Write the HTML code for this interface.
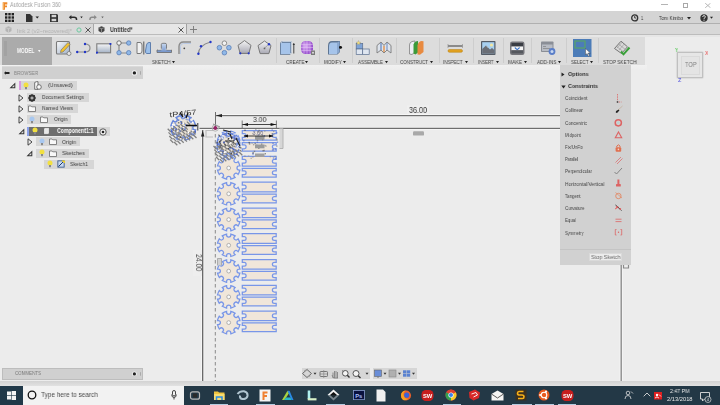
<!DOCTYPE html>
<html><head><meta charset="utf-8">
<style>
*{margin:0;padding:0;box-sizing:border-box}
html,body{width:720px;height:405px;overflow:hidden;background:#ececec;font-family:"Liberation Sans",sans-serif}
.a{position:absolute}
.t{position:absolute;white-space:nowrap;line-height:1;transform-origin:0 0;will-change:transform}
</style></head><body>
<div class="a" style="left:0;top:0;width:720px;height:11px;background:#fff"></div>
<svg class="a" style="left:2px;top:2px" width="6" height="8" viewBox="0 0 6 8"><path d="M0.8 0.3H5.3V2.4H3V3.5H5V5.2H3V7.7H0.8Z" fill="#ef8a2a"/><path d="M0.8 0.3H2V7.7H0.8Z" fill="#f6b060"/></svg>
<div class="t" style="left:10.00px;top:2.04px;font-size:6.69px;color:#a4a4a4;transform:scaleX(0.812);">Autodesk Fusion 360</div>
<div class="a" style="left:660.7px;top:4.4px;width:7.7px;height:1px;background:#b4b4b4"></div>
<div class="a" style="left:683px;top:3.2px;width:4.6px;height:4.6px;border:1px solid #a8a8a8"></div>
<svg class="a" style="left:705.2px;top:3.1px" width="6" height="5" viewBox="0 0 6 5"><path d="M0.2 0.2L5.5 4.8M5.5 0.2L0.2 4.8" stroke="#b0b0b0" stroke-width="0.9"/></svg>
<div class="a" style="left:0;top:11px;width:720px;height:13px;background:#d4d4d4"></div>
<svg class="a" style="left:5px;top:13px" width="9" height="9" viewBox="0 0 9 9"><g fill="#222">
<rect x="0" y="0" width="2.4" height="2.4"/><rect x="3.3" y="0" width="2.4" height="2.4"/><rect x="6.6" y="0" width="2.4" height="2.4"/>
<rect x="0" y="3.3" width="2.4" height="2.4"/><rect x="3.3" y="3.3" width="2.4" height="2.4"/><rect x="6.6" y="3.3" width="2.4" height="2.4"/>
<rect x="0" y="6.6" width="2.4" height="2.4"/><rect x="3.3" y="6.6" width="2.4" height="2.4"/><rect x="6.6" y="6.6" width="2.4" height="2.4"/></g></svg>
<svg class="a" style="left:26px;top:14px" width="14" height="8" viewBox="0 0 14 8"><path d="M0 0H4L6.5 2.5V8H0Z" fill="#333"/><path d="M9.5 2.5H13L11.25 4.5Z" fill="#222"/></svg>
<svg class="a" style="left:50px;top:14px" width="8" height="8" viewBox="0 0 8 8"><path d="M0 0H7L8 1V8H0Z" fill="#333"/><rect x="1.6" y="0.8" width="4.6" height="2.4" fill="#d4d4d4"/><rect x="1.6" y="4.8" width="4.6" height="2.4" fill="#d4d4d4"/></svg>
<svg class="a" style="left:68px;top:14px" width="16" height="8" viewBox="0 0 16 8"><path d="M2.5 3.2H6Q8.5 3.2 8.5 5.2V6" fill="none" stroke="#2a2a2a" stroke-width="1.5"/><path d="M0.8 3.2L3.4 0.9V5.5Z" fill="#2a2a2a"/><path d="M12.3 2.5H14.7L13.5 4.2Z" fill="#222"/></svg>
<svg class="a" style="left:89px;top:14px" width="16" height="8" viewBox="0 0 16 8"><path d="M6 3.2H3Q1 3.2 1 5.2V6" fill="none" stroke="#8a8a8a" stroke-width="1.5"/><path d="M7.8 3.2L5.2 0.9V5.5Z" fill="#8a8a8a"/><path d="M12.3 2.5H14.7L13.5 4.2Z" fill="#666"/></svg>
<svg class="a" style="left:631px;top:14px" width="8" height="8" viewBox="0 0 8 8"><circle cx="3.7" cy="3.9" r="3" fill="none" stroke="#333" stroke-width="1.3"/><path d="M3.7 2V4H5.2" fill="none" stroke="#333" stroke-width="0.9"/></svg>
<div class="t" style="left:640.60px;top:14.61px;font-size:6.25px;color:#333;transform:scaleX(0.663);">1</div>
<div class="t" style="left:659.00px;top:15.01px;font-size:6.25px;color:#333;transform:scaleX(0.768);">Tom Kimbo</div>
<svg class="a" style="left:686.5px;top:16.8px" width="4" height="3" viewBox="0 0 4 3"><path d="M0 0H4L2 2.4Z" fill="#222"/></svg>
<svg class="a" style="left:700px;top:14px" width="14" height="8" viewBox="0 0 14 8"><circle cx="4" cy="4" r="3.7" fill="#333"/><path d="M2.7 3Q2.7 1.6 4 1.6Q5.4 1.6 5.4 2.9Q5.4 3.8 4 4.4V5.2" fill="none" stroke="#d4d4d4" stroke-width="1"/><rect x="3.5" y="5.8" width="1" height="1" fill="#d4d4d4"/><path d="M10 2.8H13L11.5 4.8Z" fill="#222"/></svg>
<div class="a" style="left:0;top:23px;width:720px;height:1px;background:#b0b0b0"></div>
<div class="a" style="left:0;top:24px;width:720px;height:11px;background:#d8d8d8"></div>
<div class="a" style="left:0;top:34px;width:720px;height:1px;background:#bcbcbc"></div>
<div class="a" style="left:93px;top:24px;width:94px;height:10px;background:#e6e6e6;border-left:1px solid #a8a8a8;border-right:1px solid #a0a0a0"></div>
<svg class="a" style="left:5px;top:26px" width="7" height="7" viewBox="0 0 7 7"><path d="M0.5 1.5L3.5 0.3L6.5 1.5V5L3.5 6.7L0.5 5Z" fill="#b4b4b4"/><path d="M0.5 1.5L3.5 2.7L6.5 1.5M3.5 2.7V6.7" fill="none" stroke="#d8d8d8" stroke-width="0.6"/></svg>
<div class="t" style="left:17.00px;top:27.51px;font-size:6.25px;color:#b0b0b0;transform:scaleX(0.902);">link 2 (v2~recovered)*</div>
<svg class="a" style="left:76px;top:27px" width="6" height="6" viewBox="0 0 6 6"><circle cx="3" cy="3" r="2.1" fill="none" stroke="#6cc9a0" stroke-width="1"/></svg>
<svg class="a" style="left:85px;top:27px" width="6" height="6" viewBox="0 0 6 6"><path d="M0.5 0.5L5.5 5.5M5.5 0.5L0.5 5.5" stroke="#444" stroke-width="0.9"/></svg>
<svg class="a" style="left:98px;top:26px" width="7" height="7" viewBox="0 0 7 7"><path d="M0.5 1.5L3.5 0.3L6.5 1.5V5L3.5 6.7L0.5 5Z" fill="#444"/><path d="M0.5 1.5L3.5 2.7L6.5 1.5M3.5 2.7V6.7" fill="none" stroke="#bbb" stroke-width="0.6"/></svg>
<div class="t" style="left:110.00px;top:27.39px;font-size:6.40px;color:#3a3a3a;font-weight:bold;transform:scaleX(0.856);">Untitled*</div>
<svg class="a" style="left:178px;top:27px" width="6" height="6" viewBox="0 0 6 6"><path d="M0.5 0.5L5.5 5.5M5.5 0.5L0.5 5.5" stroke="#444" stroke-width="0.9"/></svg>
<svg class="a" style="left:190px;top:26px" width="7" height="7" viewBox="0 0 7 7"><path d="M3.5 0V7M0 3.5H7" stroke="#777" stroke-width="0.9"/></svg>
<div class="a" style="left:0;top:35px;width:720px;height:30px;background:#ececec"></div>
<div class="a" style="left:0;top:35px;width:645px;height:30px;background:#dcdcdc"></div>
<div class="a" style="left:0;top:35px;width:720px;height:1.5px;background:#e6e6e6"></div>
<div class="a" style="left:0;top:65px;width:647px;height:5px;background:linear-gradient(#f1f1f1,#ededed)"></div>
<div class="a" style="left:2px;top:37px;width:50px;height:28px;background:#ababab"></div>
<div class="a" style="left:4px;top:41px;width:3px;height:15px;background:#a2a2a2"></div>
<div class="t" style="left:16.80px;top:48.24px;font-size:6.69px;color:#f8f8f8;font-weight:bold;transform:scaleX(0.725);">MODEL</div>
<svg class="a" style="left:37.8px;top:50.3px" width="3" height="3" viewBox="0 0 3 3"><path d="M0 0H2.6L1.3 2.2Z" fill="#f8f8f8"/></svg>
<div class="a" style="left:276px;top:38px;width:1px;height:25px;background:#cdcdcd"></div>
<div class="a" style="left:318.5px;top:38px;width:1px;height:25px;background:#cdcdcd"></div>
<div class="a" style="left:352px;top:38px;width:1px;height:25px;background:#cdcdcd"></div>
<div class="a" style="left:396px;top:38px;width:1px;height:25px;background:#cdcdcd"></div>
<div class="a" style="left:438.5px;top:38px;width:1px;height:25px;background:#cdcdcd"></div>
<div class="a" style="left:473px;top:38px;width:1px;height:25px;background:#cdcdcd"></div>
<div class="a" style="left:503px;top:38px;width:1px;height:25px;background:#cdcdcd"></div>
<div class="a" style="left:531px;top:38px;width:1px;height:25px;background:#cdcdcd"></div>
<div class="a" style="left:565.5px;top:38px;width:1px;height:25px;background:#cdcdcd"></div>
<div class="a" style="left:598px;top:38px;width:1px;height:25px;background:#cdcdcd"></div>
<div class="t" style="left:152.00px;top:60.05px;font-size:5.96px;color:#464646;transform:scaleX(0.766);">SKETCH</div>
<svg class="a" style="left:171.5px;top:61px" width="3" height="3" viewBox="0 0 3 3"><path d="M0 0H3L1.5 2.2Z" fill="#222"/></svg>
<div class="t" style="left:285.50px;top:60.05px;font-size:5.96px;color:#464646;transform:scaleX(0.780);">CREATE</div>
<svg class="a" style="left:305.0px;top:61px" width="3" height="3" viewBox="0 0 3 3"><path d="M0 0H3L1.5 2.2Z" fill="#222"/></svg>
<div class="t" style="left:324.00px;top:60.05px;font-size:5.96px;color:#464646;transform:scaleX(0.764);">MODIFY</div>
<svg class="a" style="left:342.5px;top:61px" width="3" height="3" viewBox="0 0 3 3"><path d="M0 0H3L1.5 2.2Z" fill="#222"/></svg>
<div class="t" style="left:358.00px;top:60.05px;font-size:5.96px;color:#464646;transform:scaleX(0.778);">ASSEMBLE</div>
<svg class="a" style="left:384.5px;top:61px" width="3" height="3" viewBox="0 0 3 3"><path d="M0 0H3L1.5 2.2Z" fill="#222"/></svg>
<div class="t" style="left:400.00px;top:60.05px;font-size:5.96px;color:#464646;transform:scaleX(0.748);">CONSTRUCT</div>
<svg class="a" style="left:429.5px;top:61px" width="3" height="3" viewBox="0 0 3 3"><path d="M0 0H3L1.5 2.2Z" fill="#222"/></svg>
<div class="t" style="left:443.00px;top:60.05px;font-size:5.96px;color:#464646;transform:scaleX(0.755);">INSPECT</div>
<svg class="a" style="left:464.5px;top:61px" width="3" height="3" viewBox="0 0 3 3"><path d="M0 0H3L1.5 2.2Z" fill="#222"/></svg>
<div class="t" style="left:478.00px;top:60.05px;font-size:5.96px;color:#464646;transform:scaleX(0.722);">INSERT</div>
<svg class="a" style="left:495.5px;top:61px" width="3" height="3" viewBox="0 0 3 3"><path d="M0 0H3L1.5 2.2Z" fill="#222"/></svg>
<div class="t" style="left:508.00px;top:60.05px;font-size:5.96px;color:#464646;transform:scaleX(0.829);">MAKE</div>
<svg class="a" style="left:523.5px;top:61px" width="3" height="3" viewBox="0 0 3 3"><path d="M0 0H3L1.5 2.2Z" fill="#222"/></svg>
<div class="t" style="left:536.50px;top:60.05px;font-size:5.96px;color:#464646;transform:scaleX(0.796);">ADD-INS</div>
<svg class="a" style="left:557.5px;top:61px" width="3" height="3" viewBox="0 0 3 3"><path d="M0 0H3L1.5 2.2Z" fill="#222"/></svg>
<div class="t" style="left:571.00px;top:60.05px;font-size:5.96px;color:#464646;transform:scaleX(0.755);">SELECT</div>
<svg class="a" style="left:589.5px;top:61px" width="3" height="3" viewBox="0 0 3 3"><path d="M0 0H3L1.5 2.2Z" fill="#222"/></svg>
<div class="t" style="left:603.00px;top:60.05px;font-size:5.96px;color:#464646;transform:scaleX(0.801);">STOP SKETCH</div>

<svg class="a" style="left:55px;top:40px" width="17" height="16" viewBox="0 0 17 16">
 <defs><linearGradient id="g1" x1="0" y1="0" x2="1" y2="1"><stop offset="0" stop-color="#fafafa"/><stop offset="1" stop-color="#9fb0c8"/></linearGradient></defs>
 <rect x="1.5" y="1.5" width="13" height="12.5" rx="1" fill="url(#g1)" stroke="#7a7a7a" stroke-width="1.1"/>
 <path d="M6 10L13 2.5L15 4.5L8 12L5.5 12.5Z" fill="#f2c230" stroke="#6a6a6a" stroke-width="0.6"/>
 <circle cx="14" cy="13.5" r="2" fill="#e8e8e8" stroke="#777" stroke-width="0.8"/>
</svg>
<svg class="a" style="left:75px;top:42px" width="17" height="12" viewBox="0 0 17 12">
 <path d="M2 10H10Q15 10 15 6Q15 2 10 2" fill="none" stroke="#8c8c8c" stroke-width="1.2"/>
 <circle cx="2.2" cy="10" r="1.2" fill="#2236c8"/><circle cx="10" cy="10" r="1.2" fill="#2236c8"/><circle cx="10" cy="2" r="1.2" fill="#2236c8"/>
</svg>
<svg class="a" style="left:96px;top:43px" width="16" height="11" viewBox="0 0 16 11">
 <defs><linearGradient id="g2" x1="0" y1="0" x2="0" y2="1"><stop offset="0" stop-color="#f6f6f6"/><stop offset="1" stop-color="#a4b2c6"/></linearGradient></defs>
 <rect x="0.8" y="0.8" width="13.8" height="9" fill="url(#g2)" stroke="#7d7d7d" stroke-width="1.1"/>
 <circle cx="1" cy="9.6" r="1.1" fill="#2236c8"/><circle cx="14.4" cy="1" r="1.1" fill="#2236c8"/>
</svg>
<svg class="a" style="left:115px;top:40px" width="17" height="16" viewBox="0 0 17 16">
 <path d="M4 3H13.5M4 3V13M4 13H13.5" stroke="#8a8a8a" stroke-width="1.2" fill="none"/>
 <circle cx="4" cy="3" r="2.2" fill="#f4f4f4" stroke="#555" stroke-width="0.8"/>
 <circle cx="13.7" cy="3" r="2.2" fill="#8fb8e8" stroke="#5a7fb8" stroke-width="0.8"/>
 <circle cx="4" cy="12.7" r="2.2" fill="#8fb8e8" stroke="#5a7fb8" stroke-width="0.8"/>
 <circle cx="13.7" cy="12.7" r="2.2" fill="#8fb8e8" stroke="#5a7fb8" stroke-width="0.8"/>
</svg>
<svg class="a" style="left:136px;top:41px" width="16" height="14" viewBox="0 0 16 14">
 <path d="M1 1.5H4Q6 1.5 6 4V10Q6 12.5 4 12.5H1Z" fill="#f2f2f2" stroke="#7a7a7a" stroke-width="1"/>
 <path d="M7.8 0.5V13.5" stroke="#555" stroke-width="1"/>
 <path d="M14.5 1.5V12.5H10.5Q9.5 12.5 9.5 10L10.5 4Q11 1.5 13 1.5Z" fill="#9cc0ea" stroke="#5f7fae" stroke-width="1"/>
</svg>
<svg class="a" style="left:156px;top:42px" width="17" height="12" viewBox="0 0 17 12">
 <defs><linearGradient id="g3" x1="0" y1="0" x2="0" y2="1"><stop offset="0" stop-color="#c9d9f0"/><stop offset="1" stop-color="#6f90c8"/></linearGradient></defs>
 <path d="M1 10.5H15.5V8H10.5V2.5Q10.5 1.3 9 1.3H6.8Q5.3 1.3 5.3 2.5V8H1Z" fill="url(#g3)" stroke="#6a6a6a" stroke-width="0.8"/>
 <path d="M2 7.2H6.2M9.6 7.2H15" stroke="#eee" stroke-width="0.8"/>
</svg>
<svg class="a" style="left:176px;top:40px" width="16" height="16" viewBox="0 0 16 16">
 <path d="M3 14V6.5Q3 2 7.5 2H15" fill="none" stroke="#8a8a8a" stroke-width="1.4"/>
 <path d="M4.5 14V6.5Q4.5 3.5 7.5 3.5H15" fill="none" stroke="#b9c9e4" stroke-width="1"/>
 <circle cx="8.3" cy="8.3" r="0.9" fill="#444"/>
</svg>
<svg class="a" style="left:196px;top:40px" width="17" height="16" viewBox="0 0 17 16">
 <path d="M2.3 14Q3 5 14.5 2" fill="none" stroke="#8a8a8a" stroke-width="1.2"/>
 <circle cx="2.4" cy="13.8" r="1.2" fill="#2236c8"/><circle cx="5" cy="6.3" r="1.2" fill="#2236c8"/><circle cx="14.5" cy="2" r="1.2" fill="#2236c8"/>
</svg>
<svg class="a" style="left:216px;top:40px" width="16" height="16" viewBox="0 0 16 16">
 <circle cx="8.4" cy="3.2" r="2.3" fill="#f2f2f2" stroke="#7a7a7a" stroke-width="0.8"/>
 <circle cx="3.4" cy="7.7" r="2.3" fill="#8fb8e8" stroke="#5a7fb8" stroke-width="0.8"/>
 <circle cx="12.9" cy="7.7" r="2.3" fill="#8fb8e8" stroke="#5a7fb8" stroke-width="0.8"/>
 <circle cx="8.4" cy="12.7" r="2.3" fill="#8fb8e8" stroke="#5a7fb8" stroke-width="0.8"/>
</svg>
<svg class="a" style="left:237px;top:40px" width="15" height="15" viewBox="0 0 15 15">
 <defs><linearGradient id="g4" x1="0" y1="0" x2="0" y2="1"><stop offset="0" stop-color="#f4f4f4"/><stop offset="1" stop-color="#a9a9b4"/></linearGradient></defs>
 <path d="M7.5 0.6L14 5.3L11.9 13.4H3.1L1 5.3Z" fill="url(#g4)" stroke="#6e6e6e" stroke-width="0.9"/>
 <circle cx="3.3" cy="13.3" r="1.1" fill="#2236c8"/><circle cx="11.7" cy="13.3" r="1.1" fill="#2236c8"/>
</svg>
<svg class="a" style="left:257px;top:40px" width="16" height="16" viewBox="0 0 16 16">
 <path d="M7.5 1L14 5.6L11.9 13.6H3.1L1 5.6Z" fill="url(#g4)" stroke="#6e6e6e" stroke-width="0.9"/>
 <path d="M7.5 8.2L11.5 4.5" stroke="#999" stroke-width="0.8"/>
 <circle cx="7.5" cy="8.4" r="0.9" fill="#666"/><circle cx="12" cy="4.3" r="1.2" fill="#2236c8"/>
</svg>
<svg class="a" style="left:279px;top:40px" width="17" height="16" viewBox="0 0 17 16">
 <path d="M1 3L3 1H13V12.5L11 14.8H1Z" fill="#5e7592"/>
 <rect x="1.8" y="2.8" width="9.6" height="11.2" fill="#a6c4ea"/>
 <path d="M1.8 2.8L3.4 1.4H12.6V12.3L11.4 14" fill="none" stroke="#e8eef6" stroke-width="0.8"/>
 <path d="M14.8 3.5V13.5" stroke="#333" stroke-width="0.9"/><path d="M13.6 5L14.8 3L16 5Z" fill="#333"/>
</svg>
<svg class="a" style="left:300px;top:40px" width="16" height="16" viewBox="0 0 16 16">
 <defs><radialGradient id="g5" cx="0.4" cy="0.4" r="0.7"><stop offset="0" stop-color="#d9a8f2"/><stop offset="1" stop-color="#8a3ec6"/></radialGradient></defs>
 <path d="M1 6Q1 1 6 1H8Q13 1 13 6V9Q13 14 8 14H6Q1 14 1 9Z" fill="url(#g5)"/>
 <path d="M4 1.5V13.5M7 1V14M10 1.5V13.5M1.2 4.5H12.8M1 7.5H13M1.2 10.5H12.8" stroke="#e6c8f6" stroke-width="0.5"/>
 <rect x="11" y="10.5" width="4" height="4.5" fill="#7a7a7a"/><circle cx="13" cy="12.8" r="1" fill="#ddd"/>
</svg>
<svg class="a" style="left:327px;top:40px" width="17" height="16" viewBox="0 0 17 16">
 <path d="M1 14.5V6Q1 1 5 1H13V12L10.5 14.5Z" fill="#5e7592"/>
 <path d="M2 14V6.5Q2 2.5 5 2.5H10V14Z" fill="#a6c4ea"/>
 <path d="M10 2.5L12.5 1.2V12L10 14" fill="#8aa8d0"/>
 <path d="M12.5 6.3L15.5 7.4L12.5 8.5Z" fill="#111"/><circle cx="13.6" cy="7.4" r="1.4" fill="#111"/>
</svg>
<svg class="a" style="left:355px;top:40px" width="16" height="16" viewBox="0 0 16 16">
 <rect x="1.2" y="3.5" width="6.5" height="5.5" fill="#7fa4d8" stroke="#5a6e8e" stroke-width="0.7"/>
 <rect x="1.2" y="9" width="6.5" height="5.5" fill="#dfe6f0" stroke="#5a6e8e" stroke-width="0.7"/>
 <rect x="7.7" y="9" width="6.5" height="5.5" fill="#dfe6f0" stroke="#5a6e8e" stroke-width="0.7"/>
 <path d="M3.5 0.5L4.2 2.2L6 2.3L4.6 3.4L5.1 5L3.5 4.1L1.9 5L2.4 3.4L1 2.3L2.8 2.2Z" fill="#f4e07a" stroke="#888" stroke-width="0.3"/>
</svg>
<svg class="a" style="left:376px;top:41px" width="16" height="14" viewBox="0 0 16 14">
 <path d="M1 12V4.5L5 1L8 4.5L11 1L15 4.5V12L11 9L8 12L5 9Z" fill="#dde3ec" stroke="#7a7a7a" stroke-width="0.9"/>
 <path d="M5 2V9" stroke="#6a8ac0" stroke-width="1.3"/><path d="M8 5V11" stroke="#e08a40" stroke-width="1.3"/><path d="M11 2V9" stroke="#6a8ac0" stroke-width="1"/>
</svg>
<svg class="a" style="left:408px;top:40px" width="17" height="16" viewBox="0 0 17 16">
 <path d="M1.5 14V5Q1.5 2.5 4 1.5L7 1V12L4 14.5Z" fill="#eeeef4" stroke="#808080" stroke-width="0.8"/>
 <path d="M5.5 13.5V4.5Q6 2 8.5 1.3L10 1V12.5L7.5 14.5Z" fill="#3c9a3a"/>
 <path d="M9.5 14.5V5.5Q10 2 13 1L15.5 1.3V12L12 14.8Z" fill="#e88a40"/>
</svg>
<svg class="a" style="left:447px;top:43px" width="17" height="11" viewBox="0 0 17 11">
 <path d="M1 3H15.5" stroke="#777" stroke-width="1.6"/><path d="M1 1V5M15.5 1V5" stroke="#888" stroke-width="0.6"/>
 <rect x="1" y="6.5" width="14.5" height="2.8" rx="1.4" fill="#e0a020" stroke="#b88010" stroke-width="0.5"/>
</svg>
<svg class="a" style="left:480px;top:40px" width="17" height="16" viewBox="0 0 17 16">
 <rect x="1" y="1" width="14.5" height="14" rx="0.8" fill="#555c66"/>
 <rect x="2.2" y="2.2" width="12.1" height="11.6" fill="#a8d0f0"/>
 <circle cx="11.5" cy="5" r="1.6" fill="#f2e6a0"/>
 <path d="M2.2 13.8V9L6 5.5L10 9.5L12 8L14.3 10V13.8Z" fill="#6a6e76"/>
 <path d="M6 5.5L8 8" stroke="#bbb" stroke-width="0.6"/>
</svg>
<svg class="a" style="left:509px;top:40px" width="17" height="16" viewBox="0 0 17 16">
 <rect x="1" y="1.5" width="14.5" height="13.5" rx="2.2" fill="#75757a"/>
 <rect x="2.5" y="3" width="11.5" height="3.5" fill="#3a3d44"/>
 <rect x="2.5" y="6.5" width="11.5" height="3.8" fill="#f4f4f4"/>
 <path d="M5.8 6.8L8.2 9L10.6 6.8V8.6L8.2 10.2L5.8 8.6Z" fill="#3a72c8"/>
 <rect x="2.5" y="10.3" width="11.5" height="3" fill="#55585e"/>
</svg>
<svg class="a" style="left:540px;top:40px" width="17" height="16" viewBox="0 0 17 16">
 <rect x="1" y="1.5" width="12.5" height="10.5" rx="0.8" fill="#8a8e96"/>
 <rect x="2" y="4.5" width="10.5" height="6.5" fill="#b8bcc4"/>
 <path d="M3 6.5H6M3 8.5H10" stroke="#777" stroke-width="0.6"/>
 <circle cx="12" cy="11.5" r="3.4" fill="#5a7ec8"/><circle cx="12" cy="11.5" r="1.5" fill="#c8d8f0"/>
</svg>
<svg class="a" style="left:572px;top:38px" width="20" height="20" viewBox="0 0 20 20">
 <rect x="1" y="1" width="18.5" height="18" fill="#4c7cb8"/>
 <rect x="3" y="3" width="10" height="7" fill="none" stroke="#58a860" stroke-width="1.1"/>
 <path d="M13.5 10.5V17L15 15.5L16.5 18.5L17.5 18L16.2 15H18.3Z" fill="#f8f8f8" stroke="#333" stroke-width="0.4"/>
</svg>
<svg class="a" style="left:613px;top:40px" width="18" height="16" viewBox="0 0 18 16">
 <path d="M1.5 8.5L8 1.2L14.5 6.8L8.5 13.5Z" fill="#d8d8d8" stroke="#6a6a6a" stroke-width="0.9"/>
 <path d="M3.5 6.3L10 11.5M5.5 4L12 9.2M6 10L11.5 3.8M4 8L9.5 1.8" stroke="#888" stroke-width="0.5"/>
 <path d="M8 11.5L10.5 14.3L16.5 7.5" fill="none" stroke="#3aa03a" stroke-width="2"/>
</svg>
<div class="a" style="left:1.5px;top:66.3px;width:141.5px;height:12.5px;background:#d0d0d0;border-top:1px solid #dadada"></div>
<svg class="a" style="left:4px;top:71px" width="6" height="4" viewBox="0 0 6 4"><path d="M0 2L2 0.3V3.7Z" fill="#222"/><rect x="2" y="1" width="3.5" height="2" fill="#222"/></svg>
<svg class="a" style="left:131px;top:70px" width="11" height="6" viewBox="0 0 11 6"><circle cx="3.4" cy="2.9" r="2.6" fill="#f4f4f4"/><circle cx="3.4" cy="2.9" r="1.7" fill="#222"/><rect x="9" y="1.2" width="1" height="3.5" fill="#aaa"/></svg>
<div class="t" style="left:14.00px;top:70.50px;font-size:5.67px;color:#858585;transform:scaleX(0.830);">BROWSER</div>
<svg class="a" style="left:9px;top:82px" width="7" height="7" viewBox="0 0 7 7"><path d="M6.3 0.5V6.3H0.5Z" fill="#333"/><path d="M5.3 2.8V5.3H2.8Z" fill="#ddd"/></svg>
<div class="a" style="left:19px;top:81px;width:58px;height:9px;background:#d6d6d6"></div>
<div class="a" style="left:19px;top:81px;width:2px;height:9px;background:#d89ae0"></div>
<svg class="a" style="left:23px;top:81.5px" width="6" height="8" viewBox="0 0 6 8"><circle cx="3" cy="3" r="2.5" fill="#f2e040"/><rect x="2" y="5" width="2" height="2.2" fill="#8a8a8a"/></svg>
<svg class="a" style="left:34px;top:81px" width="8" height="9" viewBox="0 0 8 9"><path d="M0.7 8.3V1.5L2.5 0.7H4V8.3Z" fill="#fafafa" stroke="#555" stroke-width="0.8"/><circle cx="5" cy="6" r="2.3" fill="#fafafa" stroke="#555" stroke-width="0.8"/></svg>
<div class="t" style="left:47.80px;top:81.81px;font-size:6.25px;color:#404040;transform:scaleX(0.849);">(Unsaved)</div>
<svg class="a" style="left:18px;top:93.5px" width="6" height="8" viewBox="0 0 6 8"><path d="M1 0.8L5 4L1 7.2Z" fill="none" stroke="#333" stroke-width="0.9"/></svg>
<div class="a" style="left:27px;top:93px;width:62px;height:9px;background:#d6d6d6"></div>
<svg class="a" style="left:28px;top:93.5px" width="8" height="8" viewBox="0 0 8 8"><circle cx="4" cy="4" r="2.6" fill="none" stroke="#333" stroke-width="1.6"/><path d="M4 0V8M0 4H8M1.2 1.2L6.8 6.8M6.8 1.2L1.2 6.8" stroke="#333" stroke-width="1"/><circle cx="4" cy="4" r="1" fill="#d6d6d6"/></svg>
<div class="t" style="left:42.00px;top:93.81px;font-size:6.25px;color:#404040;transform:scaleX(0.795);">Document Settings</div>
<svg class="a" style="left:18px;top:104.5px" width="6" height="8" viewBox="0 0 6 8"><path d="M1 0.8L5 4L1 7.2Z" fill="none" stroke="#333" stroke-width="0.9"/></svg>
<div class="a" style="left:27px;top:104px;width:51px;height:9px;background:#d6d6d6"></div>
<svg class="a" style="left:28px;top:105px" width="8" height="7" viewBox="0 0 8 7"><path d="M0.5 1H3L3.8 1.8H7.5V6.5H0.5Z" fill="#f8f8f8" stroke="#6a6a6a" stroke-width="0.8"/></svg>
<div class="t" style="left:42.00px;top:104.81px;font-size:6.25px;color:#404040;transform:scaleX(0.807);">Named Views</div>
<svg class="a" style="left:18px;top:115.5px" width="6" height="8" viewBox="0 0 6 8"><path d="M1 0.8L5 4L1 7.2Z" fill="none" stroke="#333" stroke-width="0.9"/></svg>
<div class="a" style="left:27px;top:115px;width:44px;height:9px;background:#d6d6d6"></div>
<svg class="a" style="left:29px;top:115.5px" width="6" height="8" viewBox="0 0 6 8"><circle cx="3" cy="3" r="2.5" fill="#a8c8f0"/><rect x="2" y="5" width="2" height="2.2" fill="#8a8a8a"/></svg>
<svg class="a" style="left:40px;top:116px" width="8" height="7" viewBox="0 0 8 7"><path d="M0.5 1H3L3.8 1.8H7.5V6.5H0.5Z" fill="#f8f8f8" stroke="#6a6a6a" stroke-width="0.8"/></svg>
<div class="t" style="left:54.00px;top:115.81px;font-size:6.25px;color:#404040;transform:scaleX(0.809);">Origin</div>
<svg class="a" style="left:18px;top:127.5px" width="7" height="7" viewBox="0 0 7 7"><path d="M6.3 0.5V6.3H0.5Z" fill="#333"/><path d="M5.3 2.8V5.3H2.8Z" fill="#ddd"/></svg>
<div class="a" style="left:27px;top:126.5px;width:70px;height:9.0px;background:#6e6e6e"></div>
<div class="a" style="left:97px;top:126.5px;width:13px;height:9.0px;background:#d6d6d6"></div>
<div class="a" style="left:27px;top:126.5px;width:1.5px;height:9px;background:#8aa0e8"></div>
<svg class="a" style="left:32px;top:127px" width="6" height="8" viewBox="0 0 6 8"><circle cx="3" cy="3" r="2.5" fill="#f2e040"/><rect x="2" y="5" width="2" height="2.2" fill="#8a8a8a"/></svg>
<svg class="a" style="left:43px;top:127px" width="7" height="8" viewBox="0 0 7 8"><path d="M0.6 7.4V1.6L2 0.6H6.4V6.4L5 7.4Z" fill="#e8e8e8" stroke="#444" stroke-width="0.6"/></svg>
<div class="t" style="left:56.70px;top:128.14px;font-size:6.69px;color:#fafafa;font-weight:bold;transform:scaleX(0.780);">Component1:1</div>
<svg class="a" style="left:99px;top:127.5px" width="8" height="8" viewBox="0 0 8 8"><circle cx="4" cy="4" r="3.2" fill="#f4f4f4" stroke="#333" stroke-width="0.8"/><circle cx="4" cy="4" r="1.3" fill="#222"/></svg>
<svg class="a" style="left:27px;top:137.5px" width="6" height="8" viewBox="0 0 6 8"><path d="M1 0.8L5 4L1 7.2Z" fill="none" stroke="#333" stroke-width="0.9"/></svg>
<div class="a" style="left:36px;top:137px;width:44px;height:9px;background:#d6d6d6"></div>
<svg class="a" style="left:39px;top:137.5px" width="6" height="8" viewBox="0 0 6 8"><circle cx="3" cy="3" r="2.5" fill="#a8c8f0"/><rect x="2" y="5" width="2" height="2.2" fill="#8a8a8a"/></svg>
<svg class="a" style="left:49px;top:138px" width="8" height="7" viewBox="0 0 8 7"><path d="M0.5 1H3L3.8 1.8H7.5V6.5H0.5Z" fill="#f8f8f8" stroke="#6a6a6a" stroke-width="0.8"/></svg>
<div class="t" style="left:62.00px;top:138.81px;font-size:6.25px;color:#404040;transform:scaleX(0.839);">Origin</div>
<svg class="a" style="left:26px;top:149.5px" width="7" height="7" viewBox="0 0 7 7"><path d="M6.3 0.5V6.3H0.5Z" fill="#333"/><path d="M5.3 2.8V5.3H2.8Z" fill="#ddd"/></svg>
<div class="a" style="left:36px;top:148.5px;width:53px;height:9.0px;background:#d6d6d6"></div>
<svg class="a" style="left:38.5px;top:149px" width="6" height="8" viewBox="0 0 6 8"><circle cx="3" cy="3" r="2.5" fill="#f2e040"/><rect x="2" y="5" width="2" height="2.2" fill="#8a8a8a"/></svg>
<svg class="a" style="left:49px;top:149.5px" width="8" height="7" viewBox="0 0 8 7"><path d="M0.5 1H3L3.8 1.8H7.5V6.5H0.5Z" fill="#f8f8f8" stroke="#6a6a6a" stroke-width="0.8"/></svg>
<div class="t" style="left:62.00px;top:150.01px;font-size:6.25px;color:#404040;transform:scaleX(0.894);">Sketches</div>
<div class="a" style="left:44px;top:159.5px;width:50px;height:9.0px;background:#d6d6d6"></div>
<svg class="a" style="left:47px;top:160px" width="6" height="8" viewBox="0 0 6 8"><circle cx="3" cy="3" r="2.5" fill="#f2e040"/><rect x="2" y="5" width="2" height="2.2" fill="#8a8a8a"/></svg>
<svg class="a" style="left:57px;top:160px" width="8" height="8" viewBox="0 0 8 8"><rect x="0.4" y="0.4" width="7.2" height="7.2" fill="#3a5a8c"/><rect x="1.3" y="1.3" width="5.4" height="5.4" fill="#c8d8f0"/><path d="M1.5 6.5L6.5 1.5" stroke="#1a3a6c" stroke-width="1"/><path d="M5 1L7.5 1V3" fill="#f2d020" stroke="#f2d020" stroke-width="1"/></svg>
<div class="t" style="left:70.00px;top:161.21px;font-size:6.25px;color:#404040;transform:scaleX(0.797);">Sketch1</div>
<svg class="a" style="left:0;top:0" width="720" height="381" viewBox="0 0 720 381"><defs><filter id="blr" x="-20%" y="-20%" width="140%" height="140%"><feGaussianBlur stdDeviation="0.45"/></filter></defs><path d="M222 115.6H560M199.5 128.4H560" stroke="#f6f6f6" stroke-width="3"/><path d="M215.5 115.6H560M199.5 128.4H560" stroke="#6e6e6e" stroke-width="1.1"/><path d="M215.5 112V128.5" stroke="#6e6e6e" stroke-width="1"/><path d="M216 115.6L222 113.9V117.3Z" fill="#222"/><path d="M202.7 137V381M621.2 266V381" stroke="#f6f6f6" stroke-width="3.2"/><path d="M202.7 130V381" stroke="#5a5a5a" stroke-width="1.2"/><path d="M202.7 130.5L201 136.5H204.4Z" fill="#222"/><path d="M215.3 134V381" stroke="#8a8a8a" stroke-width="1" stroke-dasharray="3.5 2.5"/><path d="M621.2 265V381" stroke="#8c8c8c" stroke-width="1.4"/><path d="M242.2 120.5V128M276.4 120.5V128" stroke="#6e6e6e" stroke-width="0.9"/><path d="M242.2 124.5H276.4" stroke="#333" stroke-width="0.9"/><path d="M242.6 124.5L248 123V126Z M276 124.5L270.6 123V126Z" fill="#111"/><path d="M226.60 131.00 L226.60 131.80 A2.1 2.1 0 0 0 230.80 131.80 L230.80 131.00 A16 16 0 0 1 235.14 132.79 L234.57 133.36 A2.1 2.1 0 0 0 237.54 136.33 L238.11 135.76 A16 16 0 0 1 239.90 140.10 L239.10 140.10 A2.1 2.1 0 0 0 239.10 144.30 L239.90 144.30 A16 16 0 0 1 238.11 148.64 L237.54 148.07 A2.1 2.1 0 0 0 234.57 151.04 L235.14 151.61 A16 16 0 0 1 230.80 153.40 L230.80 152.60 A2.1 2.1 0 0 0 226.60 152.60 L226.60 153.40 A16 16 0 0 1 222.26 151.61 L222.83 151.04 A2.1 2.1 0 0 0 219.86 148.07 L219.29 148.64 A16 16 0 0 1 217.50 144.30 L218.30 144.30 A2.1 2.1 0 0 0 218.30 140.10 L217.50 140.10 A16 16 0 0 1 219.29 135.76 L219.86 136.33 A2.1 2.1 0 0 0 222.83 133.36 L222.26 132.79 A16 16 0 0 1 226.60 131.00Z" fill="#f0e6da" stroke="#7896e8" stroke-width="1.25"/><circle cx="228.7" cy="142.2" r="1.9" fill="#fafafa" stroke="#a0a0a0" stroke-width="0.8"/><path d="M242.3 130.6H276.2V133.49999999999997H274.3A1.9 1.9 0 0 0 274.3 137.29999999999998H276.2V140.2H242.3V137.29999999999998H244.20000000000002A1.9 1.9 0 0 0 244.20000000000002 133.49999999999997H242.3Z" fill="#f0e6da" stroke="#7896e8" stroke-width="1.25"/><path d="M242.3 142.5H276.2V144.95H274.3A1.9 1.9 0 0 0 274.3 148.75H276.2V151.2H242.3V148.75H244.20000000000002A1.9 1.9 0 0 0 244.20000000000002 144.95H242.3Z" fill="#f0e6da" stroke="#7896e8" stroke-width="1.25"/><path d="M226.60 156.80 L226.60 157.60 A2.1 2.1 0 0 0 230.80 157.60 L230.80 156.80 A16 16 0 0 1 235.14 158.59 L234.57 159.16 A2.1 2.1 0 0 0 237.54 162.13 L238.11 161.56 A16 16 0 0 1 239.90 165.90 L239.10 165.90 A2.1 2.1 0 0 0 239.10 170.10 L239.90 170.10 A16 16 0 0 1 238.11 174.44 L237.54 173.87 A2.1 2.1 0 0 0 234.57 176.84 L235.14 177.41 A16 16 0 0 1 230.80 179.20 L230.80 178.40 A2.1 2.1 0 0 0 226.60 178.40 L226.60 179.20 A16 16 0 0 1 222.26 177.41 L222.83 176.84 A2.1 2.1 0 0 0 219.86 173.87 L219.29 174.44 A16 16 0 0 1 217.50 170.10 L218.30 170.10 A2.1 2.1 0 0 0 218.30 165.90 L217.50 165.90 A16 16 0 0 1 219.29 161.56 L219.86 162.13 A2.1 2.1 0 0 0 222.83 159.16 L222.26 158.59 A16 16 0 0 1 226.60 156.80Z" fill="#f0e6da" stroke="#7896e8" stroke-width="1.25"/><circle cx="228.7" cy="168" r="1.9" fill="#fafafa" stroke="#a0a0a0" stroke-width="0.8"/><path d="M242.3 156.4H276.2V159.29999999999998H274.3A1.9 1.9 0 0 0 274.3 163.1H276.2V166.0H242.3V163.1H244.20000000000002A1.9 1.9 0 0 0 244.20000000000002 159.29999999999998H242.3Z" fill="#f0e6da" stroke="#7896e8" stroke-width="1.25"/><path d="M242.3 168.3H276.2V170.75H274.3A1.9 1.9 0 0 0 274.3 174.55H276.2V177.0H242.3V174.55H244.20000000000002A1.9 1.9 0 0 0 244.20000000000002 170.75H242.3Z" fill="#f0e6da" stroke="#7896e8" stroke-width="1.25"/><path d="M226.60 182.60 L226.60 183.40 A2.1 2.1 0 0 0 230.80 183.40 L230.80 182.60 A16 16 0 0 1 235.14 184.39 L234.57 184.96 A2.1 2.1 0 0 0 237.54 187.93 L238.11 187.36 A16 16 0 0 1 239.90 191.70 L239.10 191.70 A2.1 2.1 0 0 0 239.10 195.90 L239.90 195.90 A16 16 0 0 1 238.11 200.24 L237.54 199.67 A2.1 2.1 0 0 0 234.57 202.64 L235.14 203.21 A16 16 0 0 1 230.80 205.00 L230.80 204.20 A2.1 2.1 0 0 0 226.60 204.20 L226.60 205.00 A16 16 0 0 1 222.26 203.21 L222.83 202.64 A2.1 2.1 0 0 0 219.86 199.67 L219.29 200.24 A16 16 0 0 1 217.50 195.90 L218.30 195.90 A2.1 2.1 0 0 0 218.30 191.70 L217.50 191.70 A16 16 0 0 1 219.29 187.36 L219.86 187.93 A2.1 2.1 0 0 0 222.83 184.96 L222.26 184.39 A16 16 0 0 1 226.60 182.60Z" fill="#f0e6da" stroke="#7896e8" stroke-width="1.25"/><circle cx="228.7" cy="193.8" r="1.9" fill="#fafafa" stroke="#a0a0a0" stroke-width="0.8"/><path d="M242.3 182.20000000000002H276.2V185.1H274.3A1.9 1.9 0 0 0 274.3 188.9H276.2V191.8H242.3V188.9H244.20000000000002A1.9 1.9 0 0 0 244.20000000000002 185.1H242.3Z" fill="#f0e6da" stroke="#7896e8" stroke-width="1.25"/><path d="M242.3 194.10000000000002H276.2V196.55H274.3A1.9 1.9 0 0 0 274.3 200.35000000000002H276.2V202.8H242.3V200.35000000000002H244.20000000000002A1.9 1.9 0 0 0 244.20000000000002 196.55H242.3Z" fill="#f0e6da" stroke="#7896e8" stroke-width="1.25"/><path d="M226.60 208.40 L226.60 209.20 A2.1 2.1 0 0 0 230.80 209.20 L230.80 208.40 A16 16 0 0 1 235.14 210.19 L234.57 210.76 A2.1 2.1 0 0 0 237.54 213.73 L238.11 213.16 A16 16 0 0 1 239.90 217.50 L239.10 217.50 A2.1 2.1 0 0 0 239.10 221.70 L239.90 221.70 A16 16 0 0 1 238.11 226.04 L237.54 225.47 A2.1 2.1 0 0 0 234.57 228.44 L235.14 229.01 A16 16 0 0 1 230.80 230.80 L230.80 230.00 A2.1 2.1 0 0 0 226.60 230.00 L226.60 230.80 A16 16 0 0 1 222.26 229.01 L222.83 228.44 A2.1 2.1 0 0 0 219.86 225.47 L219.29 226.04 A16 16 0 0 1 217.50 221.70 L218.30 221.70 A2.1 2.1 0 0 0 218.30 217.50 L217.50 217.50 A16 16 0 0 1 219.29 213.16 L219.86 213.73 A2.1 2.1 0 0 0 222.83 210.76 L222.26 210.19 A16 16 0 0 1 226.60 208.40Z" fill="#f0e6da" stroke="#7896e8" stroke-width="1.25"/><circle cx="228.7" cy="219.6" r="1.9" fill="#fafafa" stroke="#a0a0a0" stroke-width="0.8"/><path d="M242.3 208.0H276.2V210.9H274.3A1.9 1.9 0 0 0 274.3 214.70000000000002H276.2V217.6H242.3V214.70000000000002H244.20000000000002A1.9 1.9 0 0 0 244.20000000000002 210.9H242.3Z" fill="#f0e6da" stroke="#7896e8" stroke-width="1.25"/><path d="M242.3 219.9H276.2V222.35H274.3A1.9 1.9 0 0 0 274.3 226.15H276.2V228.6H242.3V226.15H244.20000000000002A1.9 1.9 0 0 0 244.20000000000002 222.35H242.3Z" fill="#f0e6da" stroke="#7896e8" stroke-width="1.25"/><path d="M226.60 234.10 L226.60 234.90 A2.1 2.1 0 0 0 230.80 234.90 L230.80 234.10 A16 16 0 0 1 235.14 235.89 L234.57 236.46 A2.1 2.1 0 0 0 237.54 239.43 L238.11 238.86 A16 16 0 0 1 239.90 243.20 L239.10 243.20 A2.1 2.1 0 0 0 239.10 247.40 L239.90 247.40 A16 16 0 0 1 238.11 251.74 L237.54 251.17 A2.1 2.1 0 0 0 234.57 254.14 L235.14 254.71 A16 16 0 0 1 230.80 256.50 L230.80 255.70 A2.1 2.1 0 0 0 226.60 255.70 L226.60 256.50 A16 16 0 0 1 222.26 254.71 L222.83 254.14 A2.1 2.1 0 0 0 219.86 251.17 L219.29 251.74 A16 16 0 0 1 217.50 247.40 L218.30 247.40 A2.1 2.1 0 0 0 218.30 243.20 L217.50 243.20 A16 16 0 0 1 219.29 238.86 L219.86 239.43 A2.1 2.1 0 0 0 222.83 236.46 L222.26 235.89 A16 16 0 0 1 226.60 234.10Z" fill="#f0e6da" stroke="#7896e8" stroke-width="1.25"/><circle cx="228.7" cy="245.3" r="1.9" fill="#fafafa" stroke="#a0a0a0" stroke-width="0.8"/><path d="M242.3 233.70000000000002H276.2V236.6H274.3A1.9 1.9 0 0 0 274.3 240.4H276.2V243.3H242.3V240.4H244.20000000000002A1.9 1.9 0 0 0 244.20000000000002 236.6H242.3Z" fill="#f0e6da" stroke="#7896e8" stroke-width="1.25"/><path d="M242.3 245.60000000000002H276.2V248.05H274.3A1.9 1.9 0 0 0 274.3 251.85000000000002H276.2V254.3H242.3V251.85000000000002H244.20000000000002A1.9 1.9 0 0 0 244.20000000000002 248.05H242.3Z" fill="#f0e6da" stroke="#7896e8" stroke-width="1.25"/><path d="M226.60 259.90 L226.60 260.70 A2.1 2.1 0 0 0 230.80 260.70 L230.80 259.90 A16 16 0 0 1 235.14 261.69 L234.57 262.26 A2.1 2.1 0 0 0 237.54 265.23 L238.11 264.66 A16 16 0 0 1 239.90 269.00 L239.10 269.00 A2.1 2.1 0 0 0 239.10 273.20 L239.90 273.20 A16 16 0 0 1 238.11 277.54 L237.54 276.97 A2.1 2.1 0 0 0 234.57 279.94 L235.14 280.51 A16 16 0 0 1 230.80 282.30 L230.80 281.50 A2.1 2.1 0 0 0 226.60 281.50 L226.60 282.30 A16 16 0 0 1 222.26 280.51 L222.83 279.94 A2.1 2.1 0 0 0 219.86 276.97 L219.29 277.54 A16 16 0 0 1 217.50 273.20 L218.30 273.20 A2.1 2.1 0 0 0 218.30 269.00 L217.50 269.00 A16 16 0 0 1 219.29 264.66 L219.86 265.23 A2.1 2.1 0 0 0 222.83 262.26 L222.26 261.69 A16 16 0 0 1 226.60 259.90Z" fill="#f0e6da" stroke="#7896e8" stroke-width="1.25"/><circle cx="228.7" cy="271.1" r="1.9" fill="#fafafa" stroke="#a0a0a0" stroke-width="0.8"/><path d="M242.3 259.5H276.2V262.40000000000003H274.3A1.9 1.9 0 0 0 274.3 266.2H276.2V269.1H242.3V266.2H244.20000000000002A1.9 1.9 0 0 0 244.20000000000002 262.40000000000003H242.3Z" fill="#f0e6da" stroke="#7896e8" stroke-width="1.25"/><path d="M242.3 271.40000000000003H276.2V273.85H274.3A1.9 1.9 0 0 0 274.3 277.65H276.2V280.1H242.3V277.65H244.20000000000002A1.9 1.9 0 0 0 244.20000000000002 273.85H242.3Z" fill="#f0e6da" stroke="#7896e8" stroke-width="1.25"/><path d="M226.60 285.70 L226.60 286.50 A2.1 2.1 0 0 0 230.80 286.50 L230.80 285.70 A16 16 0 0 1 235.14 287.49 L234.57 288.06 A2.1 2.1 0 0 0 237.54 291.03 L238.11 290.46 A16 16 0 0 1 239.90 294.80 L239.10 294.80 A2.1 2.1 0 0 0 239.10 299.00 L239.90 299.00 A16 16 0 0 1 238.11 303.34 L237.54 302.77 A2.1 2.1 0 0 0 234.57 305.74 L235.14 306.31 A16 16 0 0 1 230.80 308.10 L230.80 307.30 A2.1 2.1 0 0 0 226.60 307.30 L226.60 308.10 A16 16 0 0 1 222.26 306.31 L222.83 305.74 A2.1 2.1 0 0 0 219.86 302.77 L219.29 303.34 A16 16 0 0 1 217.50 299.00 L218.30 299.00 A2.1 2.1 0 0 0 218.30 294.80 L217.50 294.80 A16 16 0 0 1 219.29 290.46 L219.86 291.03 A2.1 2.1 0 0 0 222.83 288.06 L222.26 287.49 A16 16 0 0 1 226.60 285.70Z" fill="#f0e6da" stroke="#7896e8" stroke-width="1.25"/><circle cx="228.7" cy="296.9" r="1.9" fill="#fafafa" stroke="#a0a0a0" stroke-width="0.8"/><path d="M242.3 285.29999999999995H276.2V288.2H274.3A1.9 1.9 0 0 0 274.3 291.99999999999994H276.2V294.9H242.3V291.99999999999994H244.20000000000002A1.9 1.9 0 0 0 244.20000000000002 288.2H242.3Z" fill="#f0e6da" stroke="#7896e8" stroke-width="1.25"/><path d="M242.3 297.2H276.2V299.65H274.3A1.9 1.9 0 0 0 274.3 303.44999999999993H276.2V305.9H242.3V303.44999999999993H244.20000000000002A1.9 1.9 0 0 0 244.20000000000002 299.65H242.3Z" fill="#f0e6da" stroke="#7896e8" stroke-width="1.25"/><path d="M226.60 311.40 L226.60 312.20 A2.1 2.1 0 0 0 230.80 312.20 L230.80 311.40 A16 16 0 0 1 235.14 313.19 L234.57 313.76 A2.1 2.1 0 0 0 237.54 316.73 L238.11 316.16 A16 16 0 0 1 239.90 320.50 L239.10 320.50 A2.1 2.1 0 0 0 239.10 324.70 L239.90 324.70 A16 16 0 0 1 238.11 329.04 L237.54 328.47 A2.1 2.1 0 0 0 234.57 331.44 L235.14 332.01 A16 16 0 0 1 230.80 333.80 L230.80 333.00 A2.1 2.1 0 0 0 226.60 333.00 L226.60 333.80 A16 16 0 0 1 222.26 332.01 L222.83 331.44 A2.1 2.1 0 0 0 219.86 328.47 L219.29 329.04 A16 16 0 0 1 217.50 324.70 L218.30 324.70 A2.1 2.1 0 0 0 218.30 320.50 L217.50 320.50 A16 16 0 0 1 219.29 316.16 L219.86 316.73 A2.1 2.1 0 0 0 222.83 313.76 L222.26 313.19 A16 16 0 0 1 226.60 311.40Z" fill="#f0e6da" stroke="#7896e8" stroke-width="1.25"/><circle cx="228.7" cy="322.6" r="1.9" fill="#fafafa" stroke="#a0a0a0" stroke-width="0.8"/><path d="M242.3 311.0H276.2V313.90000000000003H274.3A1.9 1.9 0 0 0 274.3 317.7H276.2V320.6H242.3V317.7H244.20000000000002A1.9 1.9 0 0 0 244.20000000000002 313.90000000000003H242.3Z" fill="#f0e6da" stroke="#7896e8" stroke-width="1.25"/><path d="M242.3 322.90000000000003H276.2V325.35H274.3A1.9 1.9 0 0 0 274.3 329.15H276.2V331.6H242.3V329.15H244.20000000000002A1.9 1.9 0 0 0 244.20000000000002 325.35H242.3Z" fill="#f0e6da" stroke="#7896e8" stroke-width="1.25"/><g filter="url(#blr)"><path d="M181.20 115.48 L181.20 116.30 A2.1 2.1 0 0 0 185.40 116.30 L185.40 115.48 A16 16 0 0 1 190.53 117.60 L189.95 118.18 A2.1 2.1 0 0 0 192.92 121.15 L193.50 120.57 A16 16 0 0 1 195.62 125.70 L194.80 125.70 A2.1 2.1 0 0 0 194.80 129.90 L195.62 129.90 A16 16 0 0 1 193.50 135.03 L192.92 134.45 A2.1 2.1 0 0 0 189.95 137.42 L190.53 138.00 A16 16 0 0 1 185.40 140.12 L185.40 139.30 A2.1 2.1 0 0 0 181.20 139.30 L181.20 140.12 A16 16 0 0 1 176.07 138.00 L176.65 137.42 A2.1 2.1 0 0 0 173.68 134.45 L173.10 135.03 A16 16 0 0 1 170.98 129.90 L171.80 129.90 A2.1 2.1 0 0 0 171.80 125.70 L170.98 125.70 A16 16 0 0 1 173.10 120.57 L173.68 121.15 A2.1 2.1 0 0 0 176.65 118.18 L176.07 117.60 A16 16 0 0 1 181.20 115.48Z" fill="#ebe3d6" stroke="#6484dc" stroke-width="1.4"/><circle cx="183.3" cy="127.8" r="9.1" fill="none" stroke="#8ea2d8" stroke-width="1.4" stroke-dasharray="2.5 2"/><path d="M167.7 128.8l3.2 3.2 M168.5 132.4l3.2 3.2 M169.3 136.0l3.2 3.2 M170.1 139.6l3.2 3.2 M170.9 127.6l3.2 3.2 M171.7 131.2l3.2 3.2 M172.5 134.8l3.2 3.2 M173.3 138.4l3.2 3.2 M174.1 142.0l3.2 3.2 M174.1 126.4l3.2 3.2 M174.9 130.0l3.2 3.2 M175.7 133.6l3.2 3.2 M176.5 137.2l3.2 3.2 M177.3 140.8l3.2 3.2 M177.3 125.2l3.2 3.2 M178.1 128.8l3.2 3.2 M178.9 132.4l3.2 3.2 M179.7 136.0l3.2 3.2 M180.5 139.6l3.2 3.2 M180.5 124.0l3.2 3.2 M181.3 127.6l3.2 3.2 M182.1 131.2l3.2 3.2 M182.9 134.8l3.2 3.2 M183.7 138.4l3.2 3.2 M183.7 122.8l3.2 3.2 M184.5 126.4l3.2 3.2 M185.3 130.0l3.2 3.2 M186.1 133.6l3.2 3.2 M186.9 137.2l3.2 3.2 M186.9 121.6l3.2 3.2 M189.3 132.4l3.2 3.2 M190.1 136.0l3.2 3.2 M192.5 131.2l3.2 3.2 M193.3 134.8l3.2 3.2" stroke="#808080" stroke-width="1.3"/><rect x="182.4" y="129.6" width="1.5" height="1.5" fill="#f8f4ec"/><rect x="194.0" y="131.1" width="1.5" height="1.5" fill="#7a7a7a"/><rect x="182.8" y="128.4" width="1.5" height="1.5" fill="#555"/><rect x="183.6" y="128.9" width="1.5" height="1.5" fill="#6a86d8"/><rect x="184.4" y="128.3" width="1.5" height="1.5" fill="#6a86d8"/><rect x="190.5" y="130.6" width="1.5" height="1.5" fill="#8a8a8a"/><rect x="177.9" y="122.0" width="1.5" height="1.5" fill="#7a7a7a"/><rect x="178.5" y="125.3" width="1.5" height="1.5" fill="#8a8a8a"/><rect x="194.5" y="131.2" width="1.5" height="1.5" fill="#4a62c8"/><rect x="176.9" y="131.4" width="1.5" height="1.5" fill="#555"/><rect x="179.3" y="138.2" width="1.5" height="1.5" fill="#8a8a8a"/><rect x="189.5" y="132.5" width="1.5" height="1.5" fill="#8a8a8a"/><rect x="178.1" y="133.2" width="1.5" height="1.5" fill="#7a7a7a"/><rect x="175.6" y="124.5" width="1.5" height="1.5" fill="#6a86d8"/><rect x="180.8" y="122.5" width="1.5" height="1.5" fill="#4a62c8"/><rect x="171.0" y="130.5" width="1.5" height="1.5" fill="#4a62c8"/><rect x="180.0" y="138.1" width="1.5" height="1.5" fill="#f8f4ec"/><rect x="183.5" y="126.7" width="1.5" height="1.5" fill="#4a62c8"/><rect x="171.5" y="125.9" width="1.5" height="1.5" fill="#f8f4ec"/><rect x="175.4" y="130.4" width="1.5" height="1.5" fill="#7a7a7a"/><rect x="187.5" y="131.6" width="1.5" height="1.5" fill="#ffffff"/><rect x="176.4" y="138.4" width="1.5" height="1.5" fill="#6a86d8"/><rect x="192.1" y="130.0" width="1.5" height="1.5" fill="#ffffff"/><rect x="173.3" y="124.0" width="1.5" height="1.5" fill="#ffffff"/><rect x="179.6" y="136.5" width="1.5" height="1.5" fill="#555"/><rect x="172.5" y="128.0" width="1.5" height="1.5" fill="#7a7a7a"/><rect x="190.2" y="116.9" width="1.5" height="1.5" fill="#6a86d8"/><rect x="183.0" y="127.0" width="1.5" height="1.5" fill="#f8f4ec"/><rect x="180.7" y="119.4" width="1.5" height="1.5" fill="#f8f4ec"/><rect x="185.0" y="124.3" width="1.5" height="1.5" fill="#6a86d8"/><rect x="186.9" y="124.7" width="1.5" height="1.5" fill="#6a86d8"/><rect x="178.2" y="134.4" width="1.5" height="1.5" fill="#6a86d8"/><rect x="193.0" y="131.6" width="1.5" height="1.5" fill="#8a8a8a"/><rect x="182.9" y="122.4" width="1.5" height="1.5" fill="#ffffff"/><rect x="181.0" y="127.8" width="1.5" height="1.5" fill="#6a86d8"/><rect x="171.9" y="124.1" width="1.5" height="1.5" fill="#ffffff"/><rect x="176.5" y="131.0" width="1.5" height="1.5" fill="#f8f4ec"/><rect x="179.1" y="130.3" width="1.5" height="1.5" fill="#6a86d8"/><rect x="185.3" y="127.3" width="1.5" height="1.5" fill="#8a8a8a"/><rect x="188.5" y="135.1" width="1.5" height="1.5" fill="#7a7a7a"/><rect x="175.3" y="128.6" width="1.5" height="1.5" fill="#4a62c8"/><rect x="182.9" y="129.7" width="1.5" height="1.5" fill="#555"/><rect x="178.1" y="133.4" width="1.5" height="1.5" fill="#8a8a8a"/><rect x="180.7" y="121.3" width="1.5" height="1.5" fill="#555"/><rect x="177.6" y="119.5" width="1.5" height="1.5" fill="#6a86d8"/><rect x="191.9" y="121.5" width="1.5" height="1.5" fill="#ffffff"/><rect x="180.1" y="120.9" width="1.5" height="1.5" fill="#6a86d8"/><rect x="182.2" y="128.6" width="1.5" height="1.5" fill="#f8f4ec"/><rect x="181.2" y="129.3" width="1.5" height="1.5" fill="#8a8a8a"/><rect x="181.9" y="128.3" width="1.5" height="1.5" fill="#555"/></g><text x="169.5" y="115.8" font-family="Liberation Sans" font-size="7.2" fill="#333" transform="rotate(-6 183 113)" textLength="27" lengthAdjust="spacingAndGlyphs">tP4/57</text><path d="M180 112.5L183 117M186 125.5H197M188 113L186 118" stroke="#111" stroke-width="1.3"/><path d="M197.8 123V130.5" stroke="#222" stroke-width="0.9"/><g filter="url(#blr)"><path d="M226.20 133.49 L226.20 134.30 A2.1 2.1 0 0 0 230.40 134.30 L230.40 133.49 A16 16 0 0 1 234.95 135.38 L234.38 135.95 A2.1 2.1 0 0 0 237.35 138.92 L237.92 138.35 A16 16 0 0 1 239.81 142.90 L239.00 142.90 A2.1 2.1 0 0 0 239.00 147.10 L239.81 147.10 A16 16 0 0 1 237.92 151.65 L237.35 151.08 A2.1 2.1 0 0 0 234.38 154.05 L234.95 154.62 A16 16 0 0 1 230.40 156.51 L230.40 155.70 A2.1 2.1 0 0 0 226.20 155.70 L226.20 156.51 A16 16 0 0 1 221.65 154.62 L222.22 154.05 A2.1 2.1 0 0 0 219.25 151.08 L218.68 151.65 A16 16 0 0 1 216.79 147.10 L217.60 147.10 A2.1 2.1 0 0 0 217.60 142.90 L216.79 142.90 A16 16 0 0 1 218.68 138.35 L219.25 138.92 A2.1 2.1 0 0 0 222.22 135.95 L221.65 135.38 A16 16 0 0 1 226.20 133.49Z" fill="#ebe3d6" stroke="#6484dc" stroke-width="1.4"/><circle cx="228.3" cy="145" r="8.3" fill="none" stroke="#8ea2d8" stroke-width="1.4" stroke-dasharray="2.5 2"/><path d="M213.5 146.0l3.2 3.2 M214.3 149.6l3.2 3.2 M215.1 153.2l3.2 3.2 M215.9 156.8l3.2 3.2 M216.7 144.8l3.2 3.2 M217.5 148.4l3.2 3.2 M218.3 152.0l3.2 3.2 M219.1 155.6l3.2 3.2 M219.9 159.2l3.2 3.2 M219.9 143.6l3.2 3.2 M220.7 147.2l3.2 3.2 M221.5 150.8l3.2 3.2 M222.3 154.4l3.2 3.2 M223.1 158.0l3.2 3.2 M223.1 142.4l3.2 3.2 M223.9 146.0l3.2 3.2 M224.7 149.6l3.2 3.2 M225.5 153.2l3.2 3.2 M226.3 156.8l3.2 3.2 M226.3 141.2l3.2 3.2 M227.1 144.8l3.2 3.2 M227.9 148.4l3.2 3.2 M228.7 152.0l3.2 3.2 M229.5 155.6l3.2 3.2 M229.5 140.0l3.2 3.2 M230.3 143.6l3.2 3.2 M231.1 147.2l3.2 3.2 M231.9 150.8l3.2 3.2 M232.7 154.4l3.2 3.2 M235.1 149.6l3.2 3.2 M235.9 153.2l3.2 3.2 M238.3 148.4l3.2 3.2 M239.1 152.0l3.2 3.2" stroke="#808080" stroke-width="1.3"/><rect x="228.3" y="145.0" width="1.5" height="1.5" fill="#8a8a8a"/><rect x="216.5" y="142.2" width="1.5" height="1.5" fill="#555"/><rect x="239.3" y="146.8" width="1.5" height="1.5" fill="#555"/><rect x="222.5" y="150.7" width="1.5" height="1.5" fill="#4a62c8"/><rect x="223.4" y="141.4" width="1.5" height="1.5" fill="#7a7a7a"/><rect x="235.7" y="134.7" width="1.5" height="1.5" fill="#6a86d8"/><rect x="224.3" y="145.5" width="1.5" height="1.5" fill="#8a8a8a"/><rect x="231.8" y="147.6" width="1.5" height="1.5" fill="#4a62c8"/><rect x="219.5" y="146.2" width="1.5" height="1.5" fill="#555"/><rect x="240.3" y="146.8" width="1.5" height="1.5" fill="#555"/><rect x="222.6" y="151.7" width="1.5" height="1.5" fill="#7a7a7a"/><rect x="228.5" y="141.2" width="1.5" height="1.5" fill="#f8f4ec"/><rect x="234.1" y="138.3" width="1.5" height="1.5" fill="#4a62c8"/><rect x="216.8" y="143.7" width="1.5" height="1.5" fill="#4a62c8"/><rect x="229.2" y="138.2" width="1.5" height="1.5" fill="#ffffff"/><rect x="220.2" y="144.9" width="1.5" height="1.5" fill="#555"/><rect x="233.1" y="133.3" width="1.5" height="1.5" fill="#ffffff"/><rect x="229.3" y="147.9" width="1.5" height="1.5" fill="#6a86d8"/><rect x="228.1" y="142.1" width="1.5" height="1.5" fill="#555"/><rect x="219.0" y="145.4" width="1.5" height="1.5" fill="#7a7a7a"/><rect x="229.8" y="139.1" width="1.5" height="1.5" fill="#8a8a8a"/><rect x="224.0" y="133.5" width="1.5" height="1.5" fill="#6a86d8"/><rect x="231.6" y="136.4" width="1.5" height="1.5" fill="#4a62c8"/><rect x="232.8" y="143.7" width="1.5" height="1.5" fill="#8a8a8a"/><rect x="233.1" y="148.6" width="1.5" height="1.5" fill="#4a62c8"/><rect x="230.6" y="152.7" width="1.5" height="1.5" fill="#555"/><rect x="231.6" y="139.8" width="1.5" height="1.5" fill="#f8f4ec"/><rect x="223.7" y="151.8" width="1.5" height="1.5" fill="#ffffff"/><rect x="222.1" y="135.1" width="1.5" height="1.5" fill="#ffffff"/><rect x="227.7" y="142.5" width="1.5" height="1.5" fill="#8a8a8a"/><rect x="220.9" y="148.3" width="1.5" height="1.5" fill="#7a7a7a"/><rect x="232.2" y="133.2" width="1.5" height="1.5" fill="#6a86d8"/><rect x="219.0" y="147.2" width="1.5" height="1.5" fill="#7a7a7a"/><rect x="228.0" y="142.9" width="1.5" height="1.5" fill="#8a8a8a"/><rect x="235.7" y="146.3" width="1.5" height="1.5" fill="#6a86d8"/><rect x="229.0" y="143.2" width="1.5" height="1.5" fill="#ffffff"/><rect x="223.3" y="141.6" width="1.5" height="1.5" fill="#4a62c8"/><rect x="232.2" y="150.8" width="1.5" height="1.5" fill="#7a7a7a"/><rect x="240.7" y="146.1" width="1.5" height="1.5" fill="#f8f4ec"/><rect x="236.0" y="150.8" width="1.5" height="1.5" fill="#8a8a8a"/><rect x="218.1" y="149.5" width="1.5" height="1.5" fill="#ffffff"/><rect x="228.6" y="144.7" width="1.5" height="1.5" fill="#8a8a8a"/><rect x="227.5" y="148.0" width="1.5" height="1.5" fill="#555"/><rect x="225.1" y="151.2" width="1.5" height="1.5" fill="#ffffff"/><rect x="236.2" y="153.5" width="1.5" height="1.5" fill="#4a62c8"/><rect x="235.1" y="139.9" width="1.5" height="1.5" fill="#ffffff"/><rect x="232.7" y="142.0" width="1.5" height="1.5" fill="#555"/><rect x="229.6" y="146.4" width="1.5" height="1.5" fill="#555"/><rect x="233.9" y="145.7" width="1.5" height="1.5" fill="#8a8a8a"/><rect x="220.6" y="138.7" width="1.5" height="1.5" fill="#8a8a8a"/></g><rect x="248.9" y="143.2" width="1.4" height="1.4" fill="#6a6a6a" opacity="0.7"/><rect x="261.9" y="138.8" width="1.4" height="1.4" fill="#444" opacity="0.7"/><rect x="261.0" y="143.5" width="1.4" height="1.4" fill="#6a6a6a" opacity="0.7"/><rect x="273.0" y="130.7" width="1.4" height="1.4" fill="#8a8a8a" opacity="0.7"/><rect x="252.4" y="152.2" width="1.4" height="1.4" fill="#444" opacity="0.7"/><rect x="258.4" y="129.8" width="1.4" height="1.4" fill="#6a6a6a" opacity="0.7"/><rect x="258.1" y="147.4" width="1.4" height="1.4" fill="#444" opacity="0.7"/><rect x="263.6" y="135.0" width="1.4" height="1.4" fill="#5a72d0" opacity="0.7"/><rect x="258.4" y="145.0" width="1.4" height="1.4" fill="#9a9a9a" opacity="0.7"/><rect x="260.3" y="136.4" width="1.4" height="1.4" fill="#444" opacity="0.7"/><rect x="272.8" y="157.3" width="1.4" height="1.4" fill="#5a72d0" opacity="0.7"/><rect x="274.4" y="155.8" width="1.4" height="1.4" fill="#8a8a8a" opacity="0.7"/><rect x="271.6" y="133.1" width="1.4" height="1.4" fill="#6a6a6a" opacity="0.7"/><rect x="256.3" y="138.5" width="1.4" height="1.4" fill="#8a8a8a" opacity="0.7"/><rect x="257.6" y="135.4" width="1.4" height="1.4" fill="#5a72d0" opacity="0.7"/><rect x="269.7" y="155.9" width="1.4" height="1.4" fill="#8a8a8a" opacity="0.7"/><rect x="274.9" y="148.3" width="1.4" height="1.4" fill="#5a72d0" opacity="0.7"/><rect x="247.9" y="155.5" width="1.4" height="1.4" fill="#9a9a9a" opacity="0.7"/><rect x="250.5" y="157.6" width="1.4" height="1.4" fill="#9a9a9a" opacity="0.7"/><rect x="273.1" y="133.9" width="1.4" height="1.4" fill="#8a8a8a" opacity="0.7"/><rect x="248.5" y="141.9" width="1.4" height="1.4" fill="#444" opacity="0.7"/><rect x="256.7" y="141.6" width="1.4" height="1.4" fill="#5a72d0" opacity="0.7"/><rect x="253.8" y="150.7" width="1.4" height="1.4" fill="#6a6a6a" opacity="0.7"/><rect x="254.5" y="142.8" width="1.4" height="1.4" fill="#6a6a6a" opacity="0.7"/><rect x="256.1" y="144.5" width="1.4" height="1.4" fill="#5a72d0" opacity="0.7"/><rect x="260.4" y="130.9" width="1.4" height="1.4" fill="#8a8a8a" opacity="0.7"/><rect x="276.0" y="132.1" width="1.4" height="1.4" fill="#5a72d0" opacity="0.7"/><rect x="252.2" y="156.2" width="1.4" height="1.4" fill="#8a8a8a" opacity="0.7"/><rect x="252.2" y="132.9" width="1.4" height="1.4" fill="#9a9a9a" opacity="0.7"/><rect x="271.9" y="149.3" width="1.4" height="1.4" fill="#5a72d0" opacity="0.7"/><rect x="256.8" y="145.1" width="1.4" height="1.4" fill="#444" opacity="0.7"/><rect x="262.4" y="150.0" width="1.4" height="1.4" fill="#6a6a6a" opacity="0.7"/><rect x="252.5" y="153.0" width="1.4" height="1.4" fill="#8a8a8a" opacity="0.7"/><rect x="257.5" y="131.2" width="1.4" height="1.4" fill="#6a6a6a" opacity="0.7"/><rect x="264.6" y="153.0" width="1.4" height="1.4" fill="#6a6a6a" opacity="0.7"/><rect x="263.7" y="135.7" width="1.4" height="1.4" fill="#5a72d0" opacity="0.7"/><rect x="272.3" y="142.6" width="1.4" height="1.4" fill="#5a72d0" opacity="0.7"/><rect x="276.8" y="141.5" width="1.4" height="1.4" fill="#5a72d0" opacity="0.7"/><rect x="264.1" y="130.3" width="1.4" height="1.4" fill="#8a8a8a" opacity="0.7"/><rect x="274.9" y="158.1" width="1.4" height="1.4" fill="#5a72d0" opacity="0.7"/><rect x="244.7" y="135.1" width="1.4" height="1.4" fill="#5a72d0" opacity="0.7"/><rect x="264.4" y="144.9" width="1.4" height="1.4" fill="#8a8a8a" opacity="0.7"/><rect x="252.9" y="144.0" width="1.4" height="1.4" fill="#8a8a8a" opacity="0.7"/><rect x="252.2" y="153.1" width="1.4" height="1.4" fill="#5a72d0" opacity="0.7"/><rect x="244.3" y="129.6" width="1.4" height="1.4" fill="#444" opacity="0.7"/><rect x="261.7" y="134.7" width="1.4" height="1.4" fill="#9a9a9a" opacity="0.7"/><rect x="251.4" y="142.4" width="1.4" height="1.4" fill="#9a9a9a" opacity="0.7"/><rect x="265.3" y="145.4" width="1.4" height="1.4" fill="#9a9a9a" opacity="0.7"/><rect x="276.0" y="138.2" width="1.4" height="1.4" fill="#8a8a8a" opacity="0.7"/><rect x="276.4" y="139.3" width="1.4" height="1.4" fill="#8a8a8a" opacity="0.7"/><rect x="256.8" y="139.4" width="1.4" height="1.4" fill="#6a6a6a" opacity="0.7"/><rect x="271.5" y="129.4" width="1.4" height="1.4" fill="#5a72d0" opacity="0.7"/><rect x="257.6" y="130.7" width="1.4" height="1.4" fill="#9a9a9a" opacity="0.7"/><rect x="272.6" y="149.1" width="1.4" height="1.4" fill="#5a72d0" opacity="0.7"/><rect x="263.4" y="149.8" width="1.4" height="1.4" fill="#6a6a6a" opacity="0.7"/><rect x="258.6" y="133.7" width="1.4" height="1.4" fill="#9a9a9a" opacity="0.7"/><rect x="243.1" y="139.9" width="1.4" height="1.4" fill="#5a72d0" opacity="0.7"/><rect x="276.1" y="145.4" width="1.4" height="1.4" fill="#8a8a8a" opacity="0.7"/><rect x="244.2" y="155.5" width="1.4" height="1.4" fill="#8a8a8a" opacity="0.7"/><rect x="255.1" y="129.0" width="1.4" height="1.4" fill="#9a9a9a" opacity="0.7"/><g filter="url(#blr)"><path d="M220.0 134.1l1.8 1.2" stroke="#f4f4f4" stroke-width="1.1"/><path d="M218.5 134.7l1.8 2" stroke="#5a5a5a" stroke-width="1.1"/><path d="M221.7 147.6l2.4 -1.6" stroke="#888" stroke-width="1.1"/><path d="M235.3 138.9l-1.5 2" stroke="#3a52b8" stroke-width="1.1"/><path d="M238.0 147.6l2.4 2" stroke="#f4f4f4" stroke-width="1.1"/><path d="M234.8 139.1l-1.5 2" stroke="#888" stroke-width="1.1"/><path d="M238.0 145.7l-1.5 2" stroke="#f4f4f4" stroke-width="1.1"/><path d="M234.4 143.3l1.8 1.2" stroke="#5a5a5a" stroke-width="1.1"/><path d="M219.0 142.0l2.4 -1.6" stroke="#333" stroke-width="1.1"/><path d="M231.4 141.8l-1.5 2" stroke="#f4f4f4" stroke-width="1.1"/><path d="M223.9 133.8l1.8 2" stroke="#6a7ad0" stroke-width="1.1"/><path d="M220.2 139.6l-1.5 -1.6" stroke="#f4f4f4" stroke-width="1.1"/><path d="M224.4 144.0l1.8 2" stroke="#5a5a5a" stroke-width="1.1"/><path d="M233.6 138.1l1.8 -1.6" stroke="#6a7ad0" stroke-width="1.1"/><path d="M219.1 141.9l1.8 2" stroke="#5a5a5a" stroke-width="1.1"/><path d="M221.5 133.6l-1.5 -1.6" stroke="#f4f4f4" stroke-width="1.1"/><path d="M229.6 138.7l1.8 2" stroke="#f4f4f4" stroke-width="1.1"/><path d="M223.2 138.8l-1.5 -1.6" stroke="#f4f4f4" stroke-width="1.1"/><path d="M229.2 138.3l-1.5 1.2" stroke="#333" stroke-width="1.1"/><path d="M229.4 134.4l-1.5 -1.6" stroke="#333" stroke-width="1.1"/></g><path d="M223 130L231 132M225 141H234M230 134L232 139M236 138L240 146" stroke="#222" stroke-width="1.2"/><path d="M213 124L220 127" stroke="#777" stroke-width="0.9"/><rect x="255" y="136" width="9.5" height="3.8" fill="#9a9a9a"/><rect x="255" y="144.5" width="9.5" height="3.8" fill="#9a9a9a"/><rect x="255" y="153.5" width="9.5" height="3.5" fill="#a0a0a0"/><path d="M244 136H273" stroke="#222" stroke-width="0.9"/><path d="M243.5 136L248 134.6V137.4ZM273.5 136L269 134.6V137.4Z" fill="#111"/><text x="252.5" y="135" font-family="Liberation Sans" font-size="5.5" fill="#6a6a8a">3.00</text><path d="M279.5 128.5H283V148.5H279.5" fill="#d6d6d6" stroke="#a8a8a8" stroke-width="0.8"/><path d="M213 130.5H206V137H213" fill="none" stroke="#bdbdbd" stroke-width="1.2"/><path d="M217.5 265.5V258.5H221.5V265.5" fill="#d0d0d0" stroke="#a0a0a0" stroke-width="0.8"/><circle cx="215.3" cy="128" r="3.2" fill="none" stroke="#b0b0b0" stroke-width="0.9"/><circle cx="215.3" cy="128" r="1.9" fill="#962266"/><rect x="407" y="105.5" width="22" height="8.5" fill="#efefef"/><rect x="413" y="131.3" width="11" height="4.3" rx="1.2" fill="#a9a9a9"/></svg>
<div class="t" style="left:409.00px;top:105.66px;font-size:8.43px;color:#333;transform:scaleX(0.852);">36.00</div>
<div class="t" style="left:252.60px;top:115.80px;font-size:7.56px;color:#333;transform:scaleX(0.912);">3.00</div>
<div class="a" style="left:192.5px;top:250px;width:9px;height:26px;background:#eeeeee"></div>
<div class="t" style="left:202.11px;top:254.40px;font-size:8.28px;color:#505050;transform:rotate(90deg) scaleX(0.834);">24.00</div>
<svg class="a" style="left:622px;top:264px" width="8" height="6" viewBox="0 0 8 6"><path d="M1.5 0.5V4H6.5V0.5" fill="none" stroke="#8a8a8a" stroke-width="1.2"/></svg>
<div class="a" style="left:560px;top:65px;width:71px;height:200px;background:#d1d1d1"></div>
<div class="a" style="left:560px;top:248.5px;width:71px;height:1px;background:#c4c4c4"></div>
<div class="a" style="left:589px;top:252.5px;width:33px;height:8.5px;background:#ececec;border:0.5px solid #dadada"></div>
<svg class="a" style="left:561px;top:71.5px" width="4" height="5" viewBox="0 0 4 5"><path d="M0.5 0.5L3.5 2.5L0.5 4.5Z" fill="#222"/></svg>
<svg class="a" style="left:561px;top:84.5px" width="5" height="4" viewBox="0 0 5 4"><path d="M0.3 0.5H4.7L2.5 3.5Z" fill="#222"/></svg>
<div class="t" style="left:567.50px;top:71.03px;font-size:6.10px;color:#333;font-weight:bold;transform:scaleX(0.890);">Options</div>
<div class="t" style="left:567.50px;top:83.33px;font-size:6.10px;color:#333;font-weight:bold;transform:scaleX(0.885);">Constraints</div>
<div class="t" style="left:565.30px;top:95.23px;font-size:6.10px;color:#484848;transform:scaleX(0.780);">Coincident</div>
<div class="t" style="left:565.30px;top:107.44px;font-size:6.10px;color:#484848;transform:scaleX(0.747);">Collinear</div>
<div class="t" style="left:565.30px;top:119.65px;font-size:6.10px;color:#484848;transform:scaleX(0.754);">Concentric</div>
<div class="t" style="left:565.30px;top:131.86px;font-size:6.10px;color:#484848;transform:scaleX(0.693);">Midpoint</div>
<div class="t" style="left:565.30px;top:144.07px;font-size:6.10px;color:#484848;transform:scaleX(0.699);">Fix/UnFix</div>
<div class="t" style="left:565.30px;top:156.28px;font-size:6.10px;color:#484848;transform:scaleX(0.639);">Parallel</div>
<div class="t" style="left:565.30px;top:168.49px;font-size:6.10px;color:#484848;transform:scaleX(0.717);">Perpendicular</div>
<div class="t" style="left:565.30px;top:180.70px;font-size:6.10px;color:#484848;transform:scaleX(0.803);">Horizontal/Vertical</div>
<div class="t" style="left:565.30px;top:192.91px;font-size:6.10px;color:#484848;transform:scaleX(0.713);">Tangent</div>
<div class="t" style="left:565.30px;top:205.12px;font-size:6.10px;color:#484848;transform:scaleX(0.728);">Curvature</div>
<div class="t" style="left:565.30px;top:217.33px;font-size:6.10px;color:#484848;transform:scaleX(0.704);">Equal</div>
<div class="t" style="left:565.30px;top:229.54px;font-size:6.10px;color:#484848;transform:scaleX(0.673);">Symmetry</div>
<div class="t" style="left:590.80px;top:253.61px;font-size:6.25px;color:#6a6a6a;transform:scaleX(0.876);">Stop Sketch</div>

<svg class="a" style="left:613px;top:92px" width="12" height="148" viewBox="0 0 12 148">
 <path d="M4.5 2V10H8.5" fill="none" stroke="#dc6464" stroke-width="0.8" stroke-dasharray="1.5 0.8"/><circle cx="4.5" cy="10" r="0.9" fill="#555"/>
 <path d="M4 19L9.5 14" stroke="#c8b8a8" stroke-width="1"/><path d="M3 20.5L6 18" stroke="#222" stroke-width="1.3"/><circle cx="4.2" cy="19.5" r="1.1" fill="#222"/>
 <circle cx="5.3" cy="30.8" r="3.1" fill="none" stroke="#dc6464" stroke-width="1.5"/><circle cx="5.3" cy="30.8" r="1.3" fill="#b8d4d4"/>
 <path d="M5.5 40L8.7 45.8H2.3Z" fill="none" stroke="#dc6464" stroke-width="1.1"/>
 <rect x="2.6" y="55.2" width="5.6" height="4.6" rx="1" fill="#e07050"/><path d="M3.8 55.2V54Q5.4 51.6 7 54V55.2" fill="none" stroke="#e07050" stroke-width="1"/><circle cx="5.4" cy="57.4" r="0.8" fill="#f6d0c0"/>
 <path d="M2.5 70.5L8 65M4 72L9.5 66.5" stroke="#dc6464" stroke-width="0.7"/>
 <path d="M1.5 80L3.5 82L9 76" fill="none" stroke="#7a7a7a" stroke-width="0.9"/>
 <rect x="4.4" y="87.5" width="2" height="4.5" fill="#dc6464"/><rect x="3" y="92" width="4.8" height="2.6" rx="0.6" fill="#dc6464"/>
 <circle cx="5.4" cy="104" r="2.7" fill="none" stroke="#e09070" stroke-width="1"/><path d="M2.5 100.5L9 106" stroke="#e09070" stroke-width="0.8"/>
 <path d="M2.5 113L8.5 118.5" stroke="#222" stroke-width="0.9"/><circle cx="3.7" cy="114.8" r="0.9" fill="#dc6464"/><circle cx="7.3" cy="117" r="0.9" fill="#dc6464"/><path d="M2 117L5.5 115" stroke="#e44" stroke-width="0.8"/>
 <path d="M2.5 127.2H8.5M2.5 129.6H8.5" stroke="#dc6464" stroke-width="0.8"/>
 <path d="M3.5 137.5H2.3V143H3.5M7.5 137.5H8.7V143H7.5" fill="none" stroke="#dc6464" stroke-width="0.8"/><circle cx="5.5" cy="140.2" r="0.7" fill="#dc6464"/>
</svg>
<div class="a" style="left:677.3px;top:52px;width:25.5px;height:25.7px;background:#e6e6e6;border:1px solid #c0c0c0;box-shadow:0 0 1.5px rgba(0,0,0,.25)"></div>
<div class="a" style="left:680.5px;top:55.5px;width:19px;height:19px;border:1px solid #dadada;background:#e4e4e4"></div>
<div class="t" style="left:684.60px;top:61.05px;font-size:7.27px;color:#7e7e7e;transform:scaleX(0.769);">TOP</div>
<div class="t" style="left:675.30px;top:47.72px;font-size:5.52px;color:#5ac85a;font-weight:bold;transform:scaleX(0.817);">Y</div>
<div class="t" style="left:704.50px;top:51.32px;font-size:5.52px;color:#e87070;font-weight:bold;transform:scaleX(0.871);">X</div>
<div class="t" style="left:678.20px;top:77.72px;font-size:5.52px;color:#6a6ae0;font-weight:bold;transform:scaleX(0.950);">Z</div>
<div class="a" style="left:302.3px;top:368.3px;width:67.3px;height:11.2px;background:#d6d6d6"></div>
<div class="a" style="left:373px;top:368.3px;width:44px;height:11.2px;background:#d6d6d6"></div>
<svg class="a" style="left:298px;top:364px" width="124" height="20" viewBox="0 0 124 20">
 <path d="M9 5.5L13.5 9.5L9 13.5L4.5 9.5Z" fill="none" stroke="#6a6a6a" stroke-width="1"/><path d="M6 7L9.5 5M8 13.5L12.5 12" stroke="#999" stroke-width="0.8"/>
 <path d="M15.5 8.8H18.5L17 10.8Z" fill="#333"/>
 <rect x="22" y="7.5" width="7.5" height="5" rx="0.8" fill="none" stroke="#6a6a6a" stroke-width="0.9"/><path d="M22 10H29.5M25.75 6V14" stroke="#888" stroke-width="0.7"/>
 <path d="M35 14V8.5M36.5 14V7M38 14V7M39.5 14V8M34 11L35.5 14H40" fill="#e8e8e8" stroke="#777" stroke-width="0.8"/>
 <circle cx="47.3" cy="9.3" r="2.8" fill="#f4f4f4" stroke="#555" stroke-width="1"/><path d="M49.3 11.3L51.5 13.5" stroke="#333" stroke-width="1.4"/><path d="M44 6.5L45.5 7.5" stroke="#555" stroke-width="0.7"/>
 <circle cx="58" cy="9.5" r="3" fill="#f4f4f4" stroke="#555" stroke-width="1"/><path d="M60.2 11.7L62.5 14" stroke="#333" stroke-width="1.4"/>
 <path d="M67.5 8.8H70.5L69 10.8Z" fill="#333"/>
 <rect x="76.5" y="6" width="7" height="6.5" fill="#6a8ed8" stroke="#666" stroke-width="0.6"/><path d="M80 12.5V14" stroke="#666" stroke-width="0.8"/>
 <path d="M85.5 8.8H88.5L87 10.8Z" fill="#333"/>
 <rect x="91" y="6" width="7" height="7" fill="#b0b0b0" stroke="#888" stroke-width="0.6"/>
 <path d="M100 8.8H103L101.5 10.8Z" fill="#333"/>
 <rect x="105" y="6.3" width="3.4" height="3" fill="#5a82d0"/><rect x="108.8" y="6.3" width="3.4" height="3" fill="#5a82d0"/><rect x="105" y="9.7" width="3.4" height="3" fill="#5a82d0"/><rect x="108.8" y="9.7" width="3.4" height="3" fill="#5a82d0"/>
 <path d="M114 8.8H117L115.5 10.8Z" fill="#333"/>
</svg>
<div class="a" style="left:2px;top:368px;width:141px;height:11.5px;background:#d0d0d0;border:0.5px solid #bdbdbd"></div>
<svg class="a" style="left:131px;top:371px" width="11" height="6" viewBox="0 0 11 6"><circle cx="3.4" cy="2.9" r="2.4" fill="#f4f4f4"/><circle cx="3.4" cy="2.9" r="1.6" fill="#222"/><rect x="9" y="1.2" width="1" height="3.5" fill="#aaa"/></svg>
<div class="t" style="left:14.60px;top:370.90px;font-size:5.67px;color:#7a7a7a;transform:scaleX(0.786);">COMMENTS</div>
<div class="a" style="left:0;top:381px;width:720px;height:6px;background:linear-gradient(#d2d2d2,#e4e4e4)"></div>
<div class="a" style="left:0;top:386px;width:720px;height:19px;background:#233846"></div>
<div class="a" style="left:0;top:386px;width:22.5px;height:19px;background:#203848"></div>
<svg class="a" style="left:7px;top:391px" width="9" height="9" viewBox="0 0 9 9"><g fill="#f4f4f4"><rect x="0" y="0.5" width="4" height="3.7"/><rect x="4.6" y="0" width="4.4" height="4.2"/><rect x="0" y="4.8" width="4" height="3.7"/><rect x="4.6" y="4.8" width="4.4" height="4.2"/></g></svg>
<div class="a" style="left:22.5px;top:386px;width:161px;height:19px;background:#f2f2f2"></div>
<svg class="a" style="left:27px;top:390.3px" width="10" height="10" viewBox="0 0 10 10"><circle cx="5" cy="5" r="3.8" fill="none" stroke="#111" stroke-width="1.3"/></svg>
<div class="t" style="left:41.00px;top:392.07px;font-size:7.12px;color:#4a4a4a;transform:scaleX(0.905);">Type here to search</div>
<svg class="a" style="left:171px;top:390px" width="6" height="10" viewBox="0 0 6 10"><rect x="1.5" y="0.5" width="3" height="5.5" rx="1.5" fill="none" stroke="#333" stroke-width="0.9"/><path d="M0.7 4.5Q0.7 7.5 3 7.5Q5.3 7.5 5.3 4.5M3 7.5V9.5" fill="none" stroke="#333" stroke-width="0.9"/></svg>
<svg class="a" style="left:189px;top:391px" width="12" height="9" viewBox="0 0 12 9"><rect x="1.5" y="0.8" width="9" height="7.4" rx="2" fill="none" stroke="#b8b8b8" stroke-width="1.2"/><rect x="4" y="2.5" width="4" height="4" fill="#2a2a2a"/></svg>
<svg class="a" style="left:213.5px;top:390.5px" width="11" height="9" viewBox="0 0 11 9"><path d="M0 0.5H4L5 1.5H10.5V9H0Z" fill="#f0c440"/><rect x="0" y="3" width="10.5" height="6" fill="#f8dc70"/><path d="M2.5 9V6H8V9" fill="none" stroke="#2a8ae0" stroke-width="1.5"/></svg>
<svg class="a" style="left:236px;top:390px" width="13" height="10" viewBox="0 0 13 10"><path d="M1.5 4Q4 0.8 8 1.2Q12 2 11.5 6Q10.5 9.5 6.5 9Q3.5 8.5 4 5.5" fill="none" stroke="#b0c4d0" stroke-width="2"/><circle cx="7" cy="5.3" r="1.6" fill="#2a3a48"/></svg>
<svg class="a" style="left:259px;top:388.5px" width="12" height="13" viewBox="0 0 12 13"><rect x="0.5" y="0.5" width="11" height="12" fill="#f4f4f4"/><path d="M3.5 2.5H8.5V4.5H5.5V6H8V8H5.5V11H3.5Z" fill="#f08030"/></svg>
<svg class="a" style="left:281px;top:390px" width="13" height="11" viewBox="0 0 13 11"><path d="M1 10L6.5 0.8L8 3.3L3.5 10Z" fill="#a8d040"/><path d="M6.5 0.8H8.5L12.5 10H10.5Z" fill="#2a8ae8"/><path d="M3 10L5 7.5H9.5L10.5 10Z" fill="#28b8c8"/></svg>
<svg class="a" style="left:306.5px;top:390px" width="10" height="11" viewBox="0 0 10 11"><path d="M2 0.5V9" stroke="#b0f0f0" stroke-width="2.6"/><path d="M0.7 9.3H9.5" stroke="#d8f0c8" stroke-width="2.2"/></svg>
<svg class="a" style="left:327px;top:389px" width="13" height="12" viewBox="0 0 13 12"><path d="M6.5 0.5L12.5 6L6.5 11.5L0.5 6Z" fill="#f4f4f4"/><path d="M6.5 3L10 6L6.5 9L3 6Z" fill="#111"/><rect x="0" y="6" width="13" height="6" fill="#233846" opacity="0.6"/></svg>
<svg class="a" style="left:352.5px;top:390px" width="12" height="10" viewBox="0 0 12 10"><rect x="0.5" y="0.5" width="11" height="9.2" fill="#0a1240" stroke="#8aa0d0" stroke-width="0.8"/><text x="2.2" y="7.6" font-family="Liberation Sans" font-size="5.8" font-weight="bold" fill="#a8c0ff">Ps</text></svg>
<svg class="a" style="left:376px;top:388.5px" width="10" height="13" viewBox="0 0 10 13"><path d="M0.5 0.5H7L9.5 3V12.5H0.5Z" fill="#f0f0f0"/></svg>
<svg class="a" style="left:399.5px;top:389.5px" width="12" height="11" viewBox="0 0 13 12"><circle cx="6.5" cy="6" r="5.5" fill="#e8602c"/><circle cx="7.3" cy="5.6" r="2.8" fill="#3a62d8"/><path d="M1 6Q1 1 6.5 0.5Q3 2.5 4 6Q5 10 9 9.5Q6 12 3 10.5Q1 9 1 6Z" fill="#f8a020"/></svg>
<svg class="a" style="left:421px;top:388.5px" width="13" height="13" viewBox="0 0 13 13"><rect x="0.5" y="1" width="12" height="11" rx="4.5" fill="#c81e1e"/><text x="2" y="9" font-family="Liberation Sans" font-size="5.8" font-weight="bold" fill="#fff">SW</text></svg>
<svg class="a" style="left:445px;top:389px" width="12" height="12" viewBox="0 0 12 12"><circle cx="6" cy="6" r="5.5" fill="#e04030"/><path d="M6 6L1.2 3.3A5.5 5.5 0 0 1 10.8 3.3Z" fill="#e04030"/><path d="M6 6L10.8 3.3A5.5 5.5 0 0 1 6 11.5Z" fill="#f8c828"/><path d="M6 6L6 11.5A5.5 5.5 0 0 1 1.2 3.3Z" fill="#30a050"/><circle cx="6" cy="6" r="2.6" fill="#fff"/><circle cx="6" cy="6" r="2" fill="#3a80e8"/></svg>
<svg class="a" style="left:468px;top:389px" width="13" height="12" viewBox="0 0 13 12"><path d="M1 3L7 0.5L12 3.5L11 9L5.5 11.5L1.5 9Z" fill="#d82828"/><path d="M3.5 5L8 3.5L9.5 6L5.5 8" fill="none" stroke="#fff" stroke-width="0.9"/></svg>
<svg class="a" style="left:491px;top:389.5px" width="13" height="11" viewBox="0 0 13 11"><path d="M0.5 4L6.5 0.5L12.5 4V10.5H0.5Z" fill="#f4f4f4"/><path d="M0.5 4L6.5 8L12.5 4" fill="none" stroke="#333" stroke-width="0.8"/></svg>
<svg class="a" style="left:515px;top:389px" width="12" height="12" viewBox="0 0 12 12"><rect x="0.5" y="0.5" width="11" height="11" fill="#3a3020"/><path d="M8.5 2.5H4Q2.5 2.5 2.5 4.2Q2.5 6 4.5 6H7Q9 6 9 7.8Q9 9.5 7.5 9.5H3" fill="none" stroke="#f8b018" stroke-width="1.6"/></svg>
<svg class="a" style="left:538px;top:389px" width="12" height="12" viewBox="0 0 12 12"><circle cx="6" cy="6" r="5.5" fill="#e85a20"/><circle cx="6" cy="6" r="2.8" fill="none" stroke="#fff" stroke-width="1.1"/><circle cx="2.2" cy="6" r="1.1" fill="#fff"/><circle cx="8" cy="2.7" r="1.1" fill="#fff"/><circle cx="8" cy="9.3" r="1.1" fill="#fff"/></svg>
<svg class="a" style="left:561px;top:388.5px" width="13" height="13" viewBox="0 0 13 13"><rect x="0.5" y="1" width="12" height="11" rx="4.5" fill="#c81e1e"/><text x="2" y="9" font-family="Liberation Sans" font-size="5.8" font-weight="bold" fill="#fff">SW</text></svg>
<svg class="a" style="left:624px;top:390px" width="10" height="10" viewBox="0 0 10 10"><circle cx="4" cy="3" r="1.8" fill="none" stroke="#ddd" stroke-width="0.8"/><path d="M1 9Q1 5.5 4 5.5Q7 5.5 7 9" fill="none" stroke="#ddd" stroke-width="0.8"/><path d="M7 1.5L9 3.5" stroke="#ddd" stroke-width="0.8"/></svg>
<svg class="a" style="left:643px;top:392px" width="8" height="5" viewBox="0 0 8 5"><path d="M0.7 4.3L4 1L7.3 4.3" fill="none" stroke="#ddd" stroke-width="0.9"/></svg>
<svg class="a" style="left:654.4px;top:391.8px" width="8" height="8" viewBox="0 0 8 8"><rect x="0" y="0" width="8" height="7.5" fill="#e02020"/><circle cx="3" cy="3" r="1.2" fill="#fff"/><path d="M1 6Q3 3.8 5 6M5 2.5L7 4.5" fill="none" stroke="#fff" stroke-width="0.8"/></svg>
<svg class="a" style="left:700px;top:391.5px" width="12" height="11" viewBox="0 0 12 11"><path d="M0.5 0.5H9.5V7H4.5L2.5 9V7H0.5Z" fill="none" stroke="#e0e0e0" stroke-width="0.9"/><circle cx="8" cy="7.5" r="3" fill="#233846" stroke="#e0e0e0" stroke-width="0.7"/><text x="6.8" y="9.3" font-family="Liberation Sans" font-size="4.2" fill="#e0e0e0">4</text></svg>
<div class="a" style="left:210px;top:403.5px;width:18px;height:1.5px;background:#b4cce0"></div>
<div class="a" style="left:256px;top:403.5px;width:19px;height:1.5px;background:#b4cce0"></div>
<div class="a" style="left:326px;top:403.5px;width:19px;height:1.5px;background:#b4cce0"></div>
<div class="a" style="left:443px;top:403.5px;width:17.5px;height:1.5px;background:#b4cce0"></div>
<div class="a" style="left:512px;top:403.5px;width:19.5px;height:1.5px;background:#b4cce0"></div>
<div class="a" style="left:535px;top:403.5px;width:19px;height:1.5px;background:#b4cce0"></div>
<div class="a" style="left:557.7px;top:403.5px;width:18.299999999999955px;height:1.5px;background:#b4cce0"></div>
<div class="t" style="left:669.70px;top:388.60px;font-size:5.67px;color:#e8e8e8;transform:scaleX(0.928);">2:47 PM</div>
<div class="t" style="left:666.70px;top:396.80px;font-size:5.67px;color:#e8e8e8;transform:scaleX(1.015);">2/13/2018</div>
</body></html>
